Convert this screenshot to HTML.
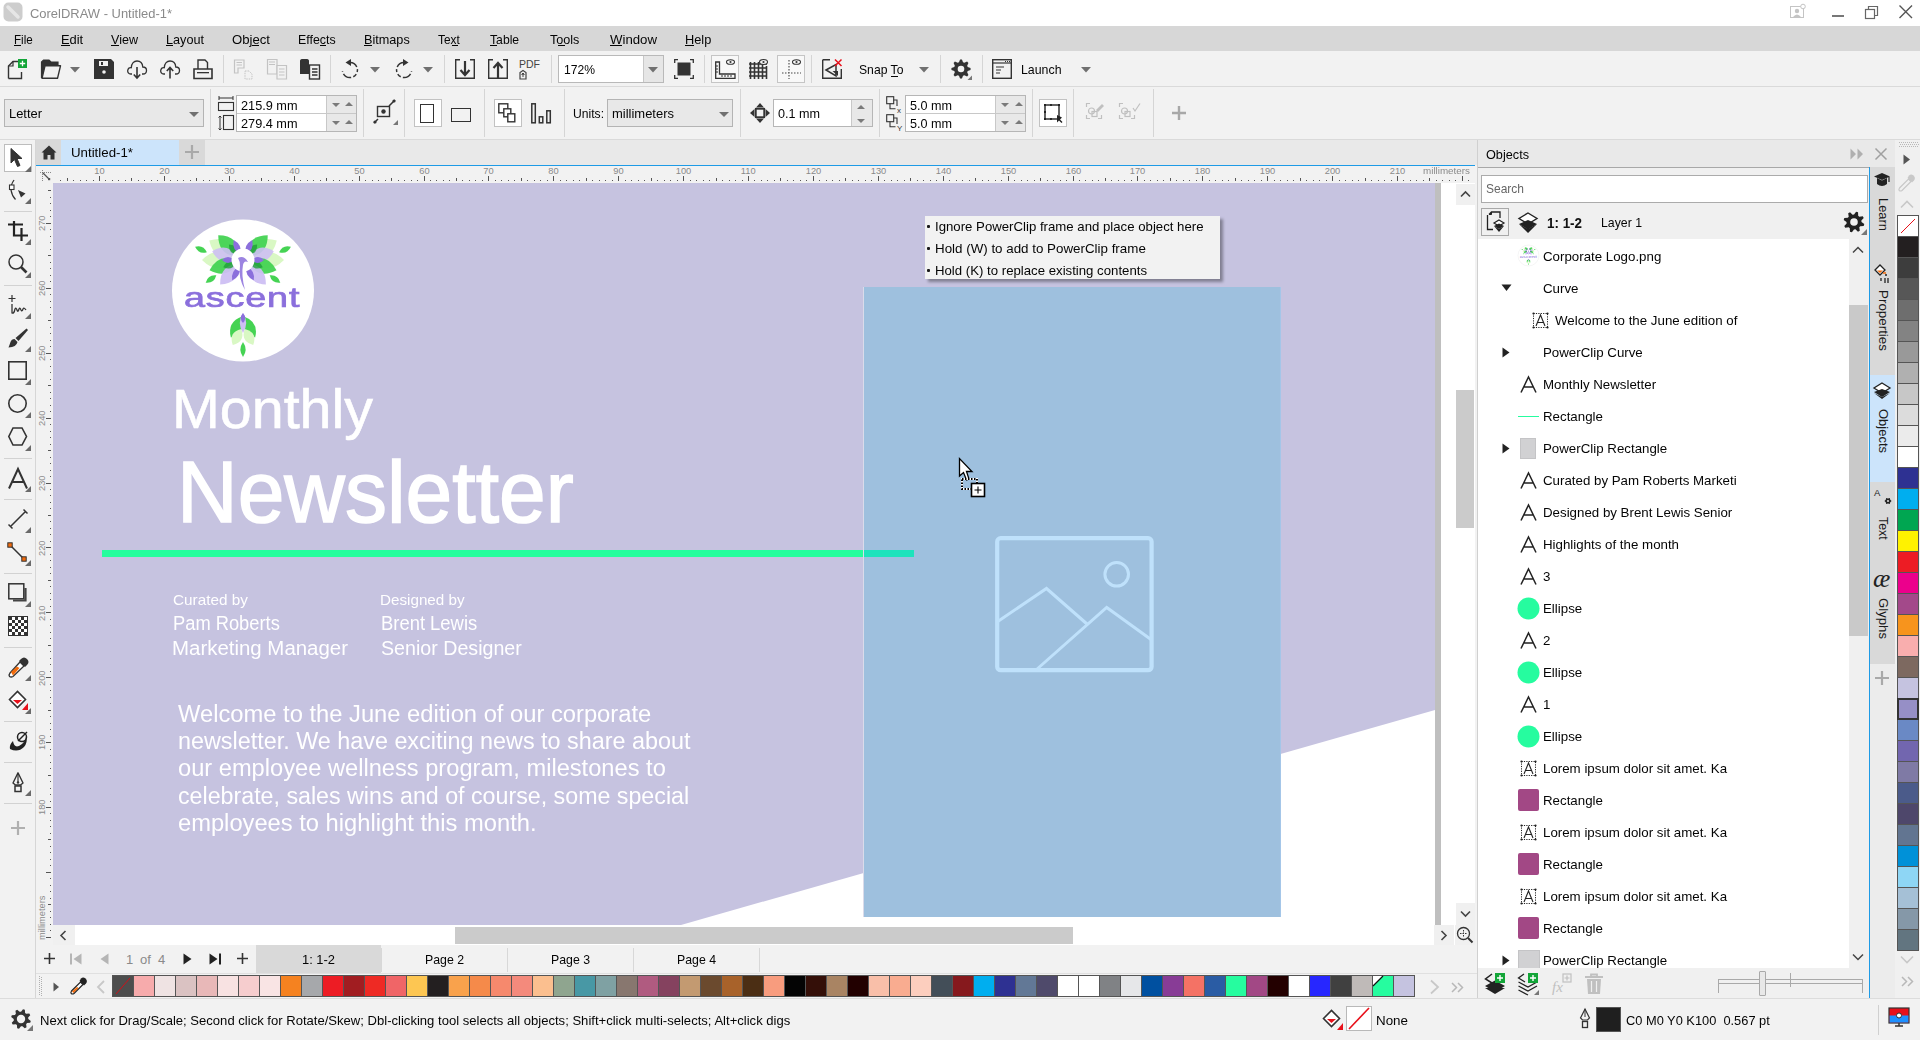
<!DOCTYPE html>
<html><head><meta charset="utf-8"><style>
html,body{margin:0;padding:0;width:1920px;height:1040px;overflow:hidden;background:#f2f2f2;position:relative;font-family:"Liberation Sans",sans-serif;}
.t{position:absolute;white-space:pre;line-height:1;}
.r{position:absolute;}
.s{position:absolute;overflow:visible;}
u{text-decoration:none;border-bottom:1px solid currentColor;}
</style></head><body>
<div class="r" style="left:0px;top:0px;width:1920px;height:26px;background:#ffffff;"></div>
<div class="r" style="left:0px;top:26px;width:1920px;height:25px;background:#d7d7d7;"></div>
<div class="r" style="left:0px;top:51px;width:1920px;height:35px;background:#f2f2f2;"></div>
<div class="r" style="left:0px;top:86px;width:1920px;height:1px;background:#dadada;"></div>
<div class="r" style="left:0px;top:87px;width:1920px;height:52px;background:#f2f2f2;"></div>
<div class="r" style="left:0px;top:139px;width:1920px;height:1px;background:#dadada;"></div>
<div class="r" style="left:0px;top:140px;width:35px;height:858px;background:#f2f2f2;"></div>
<div class="r" style="left:35px;top:140px;width:1px;height:858px;background:#d6d6d6;"></div>
<div class="r" style="left:36px;top:140px;width:1441px;height:25px;background:#e9e9e9;"></div>
<div class="r" style="left:36px;top:165px;width:1439px;height:1px;background:#1e9be6;"></div>
<div class="r" style="left:36px;top:166px;width:1439px;height:17px;background:#f2f2f2;"></div>
<div class="r" style="left:36px;top:183px;width:17px;height:762px;background:#f2f2f2;"></div>
<div class="r" style="left:53px;top:183px;width:1422px;height:762px;background:#ffffff;"></div>
<div class="r" style="left:36px;top:945px;width:1441px;height:53px;background:#f2f2f2;"></div>
<div class="r" style="left:0px;top:998px;width:1920px;height:1px;background:#dcdcdc;"></div>
<div class="r" style="left:0px;top:999px;width:1920px;height:41px;background:#f2f2f2;"></div>
<div class="r" style="left:1477px;top:140px;width:1px;height:858px;background:#d0d0d0;"></div>
<div class="r" style="left:1478px;top:140px;width:442px;height:27px;background:#e9e9e9;"></div>
<div class="r" style="left:1478px;top:167px;width:391px;height:1px;background:#a8a8a8;"></div>
<div class="r" style="left:1478px;top:168px;width:391px;height:71px;background:#f0f0f0;"></div>
<div class="r" style="left:1478px;top:239px;width:371px;height:729px;background:#ffffff;"></div>
<div class="r" style="left:1849px;top:239px;width:20px;height:729px;background:#f0f0f0;"></div>
<div class="r" style="left:1478px;top:968px;width:391px;height:30px;background:#f0f0f0;"></div>
<div class="r" style="left:1869px;top:167px;width:1px;height:831px;background:#1e9be6;"></div>
<div class="r" style="left:1870px;top:167px;width:25px;height:497px;background:#d9d9d9;"></div>
<div class="r" style="left:1870px;top:664px;width:25px;height:334px;background:#ececec;"></div>
<div class="r" style="left:1895px;top:140px;width:25px;height:858px;background:#f0f0f0;"></div>
<svg class="s" style="left:3px;top:2px;" width="20" height="20" viewBox="0 0 20 20"><rect x="0.5" y="0.5" width="19" height="19" rx="5" fill="#cdcdcd"/><path d="M5 5 L15 15" stroke="#e6e6e6" stroke-width="3.5" stroke-linecap="round"/></svg>
<div class="t" style="left:30.00px;top:6.57px;font-size:13.5px;color:#8a8a8a;transform:scaleX(0.9594);transform-origin:0 0;">CorelDRAW - Untitled-1*</div>
<svg class="s" style="left:1790px;top:4px;" width="16" height="15" viewBox="0 0 16 15"><rect x="0.5" y="2.5" width="13" height="11" fill="none" stroke="#c4c4c4"/><circle cx="7" cy="7" r="2.2" fill="#c4c4c4"/><path d="M3 13 Q7 8 11 13" fill="#c4c4c4"/><circle cx="13" cy="2.5" r="2.3" fill="#fff" stroke="#c4c4c4"/></svg>
<div class="r" style="left:1832px;top:15px;width:12px;height:2px;background:#777777;"></div>
<svg class="s" style="left:1864px;top:4px;" width="16" height="16" viewBox="0 0 16 16"><rect x="1.5" y="5.5" width="9" height="9" fill="none" stroke="#666" stroke-width="1.2"/><path d="M4.5 5.5 V2.5 H13.5 V11.5 H10.5" fill="none" stroke="#666" stroke-width="1.2"/></svg>
<svg class="s" style="left:1898px;top:4px;" width="16" height="16" viewBox="0 0 16 16"><path d="M1.5 1.5 L14 14 M14 1.5 L1.5 14" stroke="#555" stroke-width="1.4"/></svg>
<div class="t" style="left:13.80px;top:32.80px;font-size:13px;color:#050505;transform:scaleX(0.8927);transform-origin:0 0;">File</div>
<div class="r" style="left:14px;top:45px;width:7px;height:1px;background:#050505;"></div>
<div class="t" style="left:60.80px;top:32.80px;font-size:13px;color:#050505;transform:scaleX(0.9910);transform-origin:0 0;">Edit</div>
<div class="r" style="left:61px;top:45px;width:9px;height:1px;background:#050505;"></div>
<div class="t" style="left:110.80px;top:32.80px;font-size:13px;color:#050505;transform:scaleX(0.9653);transform-origin:0 0;">View</div>
<div class="r" style="left:111px;top:45px;width:8px;height:1px;background:#050505;"></div>
<div class="t" style="left:165.80px;top:32.80px;font-size:13px;color:#050505;transform:scaleX(0.9736);transform-origin:0 0;">Layout</div>
<div class="r" style="left:166px;top:45px;width:7px;height:1px;background:#050505;"></div>
<div class="t" style="left:232.00px;top:32.80px;font-size:13px;color:#050505;transform:scaleX(1.0114);transform-origin:0 0;">Object</div>
<div class="r" style="left:252px;top:45px;width:7px;height:1px;background:#050505;"></div>
<div class="t" style="left:298.00px;top:32.80px;font-size:13px;color:#050505;transform:scaleX(0.9513);transform-origin:0 0;">Effects</div>
<div class="r" style="left:320px;top:45px;width:6px;height:1px;background:#050505;"></div>
<div class="t" style="left:363.80px;top:32.80px;font-size:13px;color:#050505;transform:scaleX(0.9732);transform-origin:0 0;">Bitmaps</div>
<div class="r" style="left:364px;top:45px;width:8px;height:1px;background:#050505;"></div>
<div class="t" style="left:438.00px;top:32.80px;font-size:13px;color:#050505;transform:scaleX(0.9097);transform-origin:0 0;">Text</div>
<div class="r" style="left:452px;top:45px;width:6px;height:1px;background:#050505;"></div>
<div class="t" style="left:490.00px;top:32.80px;font-size:13px;color:#050505;transform:scaleX(0.9379);transform-origin:0 0;">Table</div>
<div class="r" style="left:490px;top:45px;width:7px;height:1px;background:#050505;"></div>
<div class="t" style="left:550.00px;top:32.80px;font-size:13px;color:#050505;transform:scaleX(0.9689);transform-origin:0 0;">Tools</div>
<div class="r" style="left:558px;top:45px;width:7px;height:1px;background:#050505;"></div>
<div class="t" style="left:610.00px;top:32.80px;font-size:13px;color:#050505;transform:scaleX(1.0165);transform-origin:0 0;">Window</div>
<div class="r" style="left:610px;top:45px;width:12px;height:1px;background:#050505;"></div>
<div class="t" style="left:685.00px;top:32.80px;font-size:13px;color:#050505;transform:scaleX(0.9837);transform-origin:0 0;">Help</div>
<div class="r" style="left:685px;top:45px;width:9px;height:1px;background:#050505;"></div>
<svg class="s" style="left:7px;top:59px;" width="21" height="21" viewBox="0 0 21 21"><path d="M1.5 19.5 V7 L6 2.5 H11" fill="none" stroke="#333" stroke-width="1.4"/><path d="M1.5 7 H6 V2.5" fill="none" stroke="#333" stroke-width="1.2"/><path d="M1.5 19.5 H14.5 V13" fill="none" stroke="#333" stroke-width="1.4"/><rect x="11" y="0" width="9" height="9" fill="#13a538"/><path d="M15.5 1.8 V7.2 M12.8 4.5 H18.2" stroke="#fff" stroke-width="1.3"/></svg>
<svg class="s" style="left:41px;top:59px;" width="20" height="20" viewBox="0 0 20 20"><path d="M0.5 19 V3 L2.5 1 H8 L10 3 H17 V6" fill="#333" stroke="#333" stroke-width="1.2"/><path d="M1 19.3 L4 6.8 H19.5 L16.5 19.3 Z" fill="#f2f2f2" stroke="#333" stroke-width="1.4" stroke-linejoin="round"/></svg>
<svg class="s" style="left:70px;top:67px;" width="10" height="6" viewBox="0 0 10 6"><path d="M0 0 H10 L5 5.5 Z" fill="#707070"/></svg>
<svg class="s" style="left:94px;top:59px;" width="20" height="20" viewBox="0 0 20 20"><path d="M0 0 H17 L20 3 V20 H0 Z" fill="#333"/><rect x="5" y="2" width="9" height="5" fill="#f2f2f2"/><rect x="7" y="3" width="2" height="3" fill="#333"/><circle cx="10" cy="13" r="1.8" fill="#f2f2f2"/></svg>
<svg class="s" style="left:127px;top:59px;" width="20" height="20" viewBox="0 0 20 20"><path d="M5 15 H3.8 C1.5 15 0.5 13 0.7 11.5 C1 9.5 2.5 8.5 4.3 8.7 C4.5 4.5 7 2 10 2 C13.5 2 15.5 4.5 15.8 8 C18 8 19.5 9.5 19.5 11.5 C19.5 13.5 18 15 16 15 H15" fill="none" stroke="#333" stroke-width="1.3"/><path d="M10 8 V19 M6.8 15.5 L10 19 L13.2 15.5" fill="none" stroke="#333" stroke-width="1.6"/></svg>
<svg class="s" style="left:160px;top:59px;" width="20" height="20" viewBox="0 0 20 20"><path d="M5 15 H3.8 C1.5 15 0.5 13 0.7 11.5 C1 9.5 2.5 8.5 4.3 8.7 C4.5 4.5 7 2 10 2 C13.5 2 15.5 4.5 15.8 8 C18 8 19.5 9.5 19.5 11.5 C19.5 13.5 18 15 16 15 H15" fill="none" stroke="#333" stroke-width="1.3"/><path d="M10 19.5 V8.5 M6.8 12 L10 8.5 L13.2 12" fill="none" stroke="#333" stroke-width="1.6"/></svg>
<svg class="s" style="left:193px;top:59px;" width="20" height="20" viewBox="0 0 20 20"><path d="M5 10 V1 H12 L14.5 3.5 V10" fill="none" stroke="#333" stroke-width="1.4"/><path d="M1 10 H19 V19.5 H1 Z" fill="none" stroke="#333" stroke-width="1.6"/><rect x="4" y="13" width="12" height="1.3" fill="#333"/></svg>
<div class="r" style="left:223px;top:55px;width:1px;height:28px;background:#d5d5d5;"></div>
<svg class="s" style="left:234px;top:59px;" width="20" height="20" viewBox="0 0 20 20"><path d="M0.5 1 H10 V9 H4 V14 H0.5 Z" fill="none" stroke="#c3c3c3" stroke-width="1.2"/><path d="M2.5 3.5 H8 M2.5 6 H8" stroke="#c3c3c3"/><path d="M11 12 H15 L18 15 V20 H11 Z" fill="none" stroke="#c3c3c3" stroke-dasharray="1.5 1"/></svg>
<svg class="s" style="left:267px;top:59px;" width="20" height="20" viewBox="0 0 20 20"><path d="M0.5 0.5 H10 V15 H0.5 Z" fill="none" stroke="#c3c3c3" stroke-width="1.2"/><path d="M2 3 H8 M2 5.5 H8" stroke="#c3c3c3"/><path d="M10 6.5 H19.5 V20 H10 Z" fill="#f2f2f2" stroke="#c3c3c3" stroke-width="1.2"/><path d="M12 10 H17.5 M12 13 H17.5 M12 16 H17.5" stroke="#c3c3c3" stroke-width="1.2"/></svg>
<svg class="s" style="left:300px;top:59px;" width="20" height="20" viewBox="0 0 20 20"><path d="M0 2 C0 0.5 1 0 3 0 H6 C8 0 9 0.5 9 2 V15 H0 Z" fill="#333"/><rect x="9.5" y="6" width="10" height="14" fill="#f2f2f2" stroke="#333" stroke-width="1.4"/><path d="M12 10 H17.5 M12 13 H17.5 M12 16 H17.5" stroke="#333" stroke-width="1.3"/></svg>
<div class="r" style="left:330px;top:55px;width:1px;height:28px;background:#d5d5d5;"></div>
<svg class="s" style="left:341px;top:59px;" width="20" height="20" viewBox="0 0 20 20"><path d="M8.5 3.5 A7.5 7.5 0 1 1 1.5 12" fill="none" stroke="#333" stroke-width="1.5" stroke-dasharray="9 2.2 3 2.2 4 2.2"/><path d="M4.5 3.5 L10 0 V7 Z" fill="#333"/></svg>
<svg class="s" style="left:370px;top:67px;" width="10" height="6" viewBox="0 0 10 6"><path d="M0 0 H10 L5 5.5 Z" fill="#707070"/></svg>
<svg class="s" style="left:393px;top:59px;" width="20" height="20" viewBox="0 0 20 20"><path d="M11.5 3.5 A7.5 7.5 0 1 0 18.5 12" fill="none" stroke="#333" stroke-width="1.5" stroke-dasharray="9 2.2 3 2.2 4 2.2"/><path d="M15.5 3.5 L10 0 V7 Z" fill="#333"/></svg>
<svg class="s" style="left:423px;top:67px;" width="10" height="6" viewBox="0 0 10 6"><path d="M0 0 H10 L5 5.5 Z" fill="#707070"/></svg>
<div class="r" style="left:444px;top:55px;width:1px;height:28px;background:#d5d5d5;"></div>
<svg class="s" style="left:455px;top:59px;" width="20" height="20" viewBox="0 0 20 20"><path d="M5 0.7 H0.7 V19.3 H19.3 V0.7 H15" fill="none" stroke="#333" stroke-width="1.4"/><path d="M10 2 V16 M5.5 11 L10 16 L14.5 11" fill="none" stroke="#333" stroke-width="2.2"/></svg>
<svg class="s" style="left:488px;top:59px;" width="20" height="20" viewBox="0 0 20 20"><path d="M5 0.7 H0.7 V19.3 H19.3 V0.7 H15" fill="none" stroke="#333" stroke-width="1.4"/><path d="M10 19 V4 M5.5 9 L10 4 L14.5 9" fill="none" stroke="#333" stroke-width="2.2"/></svg>
<svg class="s" style="left:519px;top:59px;" width="22" height="20" viewBox="0 0 22 20"><text x="0" y="9" font-family="Liberation Sans" font-size="10.5" fill="#444">PDF</text><path d="M1 20 V13.5 L4 11.5 L7 13.5 V20 Z" fill="none" stroke="#444" stroke-width="1.2"/><path d="M4 18 V14 M2.5 15.5 L4 14 L5.5 15.5" stroke="#444" stroke-width="1"/></svg>
<div class="r" style="left:551px;top:55px;width:1px;height:28px;background:#d5d5d5;"></div>
<div class="r" style="left:558px;top:55px;width:106px;height:28px;background:#ffffff;box-sizing:border-box;border:1px solid #b9b9b9;"></div>
<div class="r" style="left:643px;top:56px;width:20px;height:26px;background:#e6e6e6;box-sizing:border-box;border-left:1px solid #c8c8c8;"></div>
<svg class="s" style="left:648px;top:67px;" width="10" height="6" viewBox="0 0 10 6"><path d="M0 0 H10 L5 5.5 Z" fill="#707070"/></svg>
<div class="t" style="left:564.00px;top:62.80px;font-size:13px;color:#050505;transform:scaleX(0.9324);transform-origin:0 0;">172%</div>
<svg class="s" style="left:674px;top:59px;" width="20" height="20" viewBox="0 0 20 20"><path d="M0.7 4 V0.7 H4 M16 0.7 H19.3 V4 M19.3 16 V19.3 H16 M4 19.3 H0.7 V16" fill="none" stroke="#333" stroke-width="1.3"/><rect x="3.5" y="3.5" width="13" height="13" fill="#333"/></svg>
<div class="r" style="left:704px;top:55px;width:1px;height:28px;background:#d5d5d5;"></div>
<div class="r" style="left:711px;top:55px;width:28px;height:28px;background:#f8f8f8;box-sizing:border-box;border:1px solid #c5c5c5;"></div>
<svg class="s" style="left:715px;top:59px;" width="21" height="20" viewBox="0 0 21 20"><path d="M0.7 3 V19.3 H20 V15 H4.5 V3 Z" fill="none" stroke="#333" stroke-width="1.3"/><path d="M1 7 H3 M1 10 H3 M1 13 H3 M7 16 V18 M10 16 V18 M13 16 V18 M16 16 V18" stroke="#333"/><ellipse cx="15.5" cy="3" rx="4" ry="2.3" fill="none" stroke="#333" stroke-width="1.1"/><circle cx="15.5" cy="3" r="1.1" fill="#333"/></svg>
<svg class="s" style="left:748px;top:59px;" width="20" height="20" viewBox="0 0 20 20"><path d="M1 5 H19 M1 9 H19 M1 13 H19 M1 17 H19 M2.5 3 V20 M6.5 3 V20 M10.5 3 V20 M14.5 3 V20 M18.5 7 V20" stroke="#333" stroke-width="1.6"/><ellipse cx="15.5" cy="3" rx="4" ry="2.5" fill="#f2f2f2" stroke="#333" stroke-width="1.1"/><circle cx="15.5" cy="3" r="1.1" fill="#333"/></svg>
<div class="r" style="left:777px;top:55px;width:28px;height:28px;background:#f8f8f8;box-sizing:border-box;border:1px solid #c5c5c5;"></div>
<svg class="s" style="left:781px;top:59px;" width="20" height="20" viewBox="0 0 20 20"><path d="M8 1 V20 M1 14 H20" stroke="#444" stroke-width="1.1" stroke-dasharray="1.5 1.5"/><ellipse cx="15.5" cy="3" rx="4" ry="2.3" fill="none" stroke="#333" stroke-width="1.1"/><circle cx="15.5" cy="3" r="1.1" fill="#333"/></svg>
<div class="r" style="left:811px;top:55px;width:1px;height:28px;background:#d5d5d5;"></div>
<svg class="s" style="left:822px;top:59px;" width="20" height="20" viewBox="0 0 20 20"><path d="M0.7 0.7 H8 M0.7 0.7 V19.3 H19.3 V10" fill="none" stroke="#333" stroke-width="1.4"/><path d="M4 11 L14 5.5 V17 Z" fill="none" stroke="#333" stroke-width="1.5"/><path d="M10.5 12 L16 17 V12 Z" fill="#333"/><path d="M13 0.5 L19.5 7 M19.5 0.5 L13 7" stroke="#e8101a" stroke-width="1.5"/></svg>
<div class="t" style="left:859.00px;top:63.00px;font-size:13px;color:#050505;transform:scaleX(0.9360);transform-origin:0 0;">Snap To</div>
<div class="r" style="left:891px;top:76px;width:7px;height:1px;background:#050505;"></div>
<svg class="s" style="left:919px;top:67px;" width="10" height="6" viewBox="0 0 10 6"><path d="M0 0 H10 L5 5.5 Z" fill="#707070"/></svg>
<div class="r" style="left:940px;top:55px;width:1px;height:28px;background:#d5d5d5;"></div>
<svg class="s" style="left:951px;top:59px;" width="22" height="22" viewBox="0 0 22 22"><path d="M19.55 9.06 L19.55 10.94 L16.70 12.03 L16.17 13.30 L17.42 16.09 L16.09 17.42 L13.30 16.17 L12.03 16.70 L10.94 19.55 L9.06 19.55 L7.97 16.70 L6.70 16.17 L3.91 17.42 L2.58 16.09 L3.83 13.30 L3.30 12.03 L0.45 10.94 L0.45 9.06 L3.30 7.97 L3.83 6.70 L2.58 3.91 L3.91 2.58 L6.70 3.83 L7.97 3.30 L9.06 0.45 L10.94 0.45 L12.03 3.30 L13.30 3.83 L16.09 2.58 L17.42 3.91 L16.17 6.70 L16.70 7.97 Z" fill="#333"/><circle cx="10" cy="10" r="3.3" fill="#f2f2f2"/><path d="M16.5 21 L21 16.5 V21 Z" fill="#777"/></svg>
<div class="r" style="left:982px;top:55px;width:1px;height:28px;background:#d5d5d5;"></div>
<svg class="s" style="left:992px;top:59px;" width="20" height="20" viewBox="0 0 20 20"><rect x="0.7" y="0.7" width="18.6" height="18.6" fill="none" stroke="#333" stroke-width="1.4"/><path d="M1 4 H19" stroke="#333" stroke-width="1.2"/><path d="M13 2.5 H14 M15 2.5 H16 M17 2.5 H18" stroke="#333"/><path d="M4 8 H12 M4 11 H9 M4 14 H8" stroke="#333" stroke-width="1.2"/></svg>
<div class="t" style="left:1021.00px;top:63.00px;font-size:13px;color:#050505;transform:scaleX(0.9496);transform-origin:0 0;">Launch</div>
<svg class="s" style="left:1081px;top:67px;" width="10" height="6" viewBox="0 0 10 6"><path d="M0 0 H10 L5 5.5 Z" fill="#707070"/></svg>
<div class="r" style="left:4px;top:99px;width:200px;height:28px;background:#e8e8e8;box-sizing:border-box;border:1px solid #b4b4b4;"></div>
<div class="t" style="left:9.00px;top:106.57px;font-size:13.5px;color:#050505;transform:scaleX(0.9559);transform-origin:0 0;">Letter</div>
<svg class="s" style="left:189px;top:112px;" width="10" height="6" viewBox="0 0 10 6"><path d="M0 0 H10 L5.0 5 Z" fill="#707070"/></svg>
<div class="r" style="left:210px;top:89px;width:1px;height:48px;background:#d5d5d5;"></div>
<svg class="s" style="left:218px;top:95px;" width="18" height="36" viewBox="0 0 18 36"><path d="M1 3 H15 M1 1 V5 M15 1 V5" stroke="#333" stroke-width="1"/><rect x="0.5" y="7.5" width="15" height="8" fill="none" stroke="#333" stroke-width="1.1"/><path d="M2 21 V35 M0.5 22.5 L2 21 L3.5 22.5 M0.5 33.5 L2 35 L3.5 33.5" fill="none" stroke="#333" stroke-width="1"/><rect x="5.5" y="20.5" width="10" height="14" fill="none" stroke="#333" stroke-width="1.1"/></svg>
<div class="r" style="left:236px;top:95px;width:121px;height:37px;background:#ffffff;box-sizing:border-box;border:1px solid #b6b6b6;"></div>
<div class="r" style="left:326px;top:96px;width:30px;height:35px;background:#e8e8e8;box-sizing:border-box;border-left:1px solid #c8c8c8;"></div>
<div class="r" style="left:237px;top:113px;width:119px;height:1px;background:#c8c8c8;"></div>
<div class="t" style="left:241.00px;top:98.57px;font-size:13.5px;color:#050505;transform:scaleX(0.9413);transform-origin:0 0;">215.9 mm</div>
<div class="t" style="left:241.00px;top:116.57px;font-size:13.5px;color:#050505;transform:scaleX(0.9413);transform-origin:0 0;">279.4 mm</div>
<svg class="s" style="left:332px;top:103px;" width="8" height="5" viewBox="0 0 8 5"><path d="M0 0 H8 L4.0 4 Z" fill="#7a7a7a"/></svg>
<svg class="s" style="left:345px;top:102px;" width="8" height="5" viewBox="0 0 8 5"><path d="M0 4 H8 L4.0 0 Z" fill="#7a7a7a"/></svg>
<svg class="s" style="left:332px;top:121px;" width="8" height="5" viewBox="0 0 8 5"><path d="M0 0 H8 L4.0 4 Z" fill="#7a7a7a"/></svg>
<svg class="s" style="left:345px;top:120px;" width="8" height="5" viewBox="0 0 8 5"><path d="M0 4 H8 L4.0 0 Z" fill="#7a7a7a"/></svg>
<div class="r" style="left:363px;top:89px;width:1px;height:48px;background:#d5d5d5;"></div>
<svg class="s" style="left:373px;top:98px;" width="26" height="28" viewBox="0 0 26 28"><rect x="4.5" y="8.5" width="12" height="10" fill="none" stroke="#333" stroke-width="1.4"/><circle cx="10.5" cy="13.5" r="2.2" fill="#333"/><path d="M1 25 L5 21 M16 8 L22 2" stroke="#333" stroke-width="1.5"/><circle cx="2" cy="24" r="1.6" fill="#333"/><circle cx="21" cy="3" r="1.6" fill="#333"/><path d="M20 27 L25 22 V27 Z" fill="#777"/></svg>
<div class="r" style="left:404px;top:89px;width:1px;height:48px;background:#d5d5d5;"></div>
<div class="r" style="left:414px;top:99px;width:28px;height:28px;background:#ffffff;box-sizing:border-box;border:1px solid #c2c2c2;"></div>
<div class="r" style="left:420px;top:104px;width:14px;height:19px;background:transparent;box-sizing:border-box;border:1.6px solid #333;"></div>
<div class="r" style="left:451px;top:108px;width:20px;height:14px;background:transparent;box-sizing:border-box;border:1.6px solid #333;"></div>
<div class="r" style="left:484px;top:89px;width:1px;height:48px;background:#d5d5d5;"></div>
<div class="r" style="left:494px;top:99px;width:28px;height:28px;background:#ffffff;box-sizing:border-box;border:1px solid #c2c2c2;"></div>
<svg class="s" style="left:498px;top:103px;" width="20" height="20" viewBox="0 0 20 20"><rect x="0.8" y="0.8" width="9" height="9" fill="none" stroke="#333" stroke-width="1.4"/><rect x="5.8" y="5.8" width="7" height="8" fill="#fff" stroke="#333" stroke-width="1.4"/><rect x="9.8" y="10.8" width="7" height="8" fill="#fff" stroke="#333" stroke-width="1.4"/></svg>
<svg class="s" style="left:531px;top:103px;" width="21" height="21" viewBox="0 0 21 21"><rect x="0.8" y="0.8" width="3.5" height="19" fill="none" stroke="#333" stroke-width="1.5"/><rect x="8.3" y="13.8" width="3.5" height="6" fill="none" stroke="#333" stroke-width="1.5"/><rect x="15.8" y="7.8" width="3.5" height="12" fill="none" stroke="#333" stroke-width="1.5"/></svg>
<div class="r" style="left:564px;top:89px;width:1px;height:48px;background:#d5d5d5;"></div>
<div class="t" style="left:573.00px;top:106.57px;font-size:13.5px;color:#050505;transform:scaleX(0.8983);transform-origin:0 0;">Units:</div>
<div class="r" style="left:607px;top:99px;width:126px;height:28px;background:#e8e8e8;box-sizing:border-box;border:1px solid #b4b4b4;"></div>
<div class="t" style="left:612.00px;top:106.57px;font-size:13.5px;color:#050505;transform:scaleX(0.9612);transform-origin:0 0;">millimeters</div>
<svg class="s" style="left:719px;top:112px;" width="10" height="6" viewBox="0 0 10 6"><path d="M0 0 H10 L5.0 5 Z" fill="#707070"/></svg>
<div class="r" style="left:740px;top:89px;width:1px;height:48px;background:#d5d5d5;"></div>
<svg class="s" style="left:750px;top:103px;" width="20" height="20" viewBox="0 0 20 20"><path d="M10 0 L14 4.5 H6 Z M10 20 L14 15.5 H6 Z M0 10 L4.5 6 V14 Z M20 10 L15.5 6 V14 Z" fill="#333"/><rect x="5.8" y="5.8" width="8.4" height="8.4" fill="none" stroke="#333" stroke-width="1.8"/></svg>
<div class="r" style="left:773px;top:99px;width:100px;height:28px;background:#ffffff;box-sizing:border-box;border:1px solid #b6b6b6;"></div>
<div class="r" style="left:851px;top:100px;width:21px;height:26px;background:#e8e8e8;box-sizing:border-box;border-left:1px solid #c8c8c8;"></div>
<div class="t" style="left:778.00px;top:106.57px;font-size:13.5px;color:#050505;transform:scaleX(0.9332);transform-origin:0 0;">0.1 mm</div>
<svg class="s" style="left:857px;top:105px;" width="8" height="5" viewBox="0 0 8 5"><path d="M0 4 H8 L4.0 0 Z" fill="#7a7a7a"/></svg>
<svg class="s" style="left:857px;top:119px;" width="8" height="5" viewBox="0 0 8 5"><path d="M0 0 H8 L4.0 4 Z" fill="#7a7a7a"/></svg>
<div class="r" style="left:879px;top:89px;width:1px;height:48px;background:#d5d5d5;"></div>
<svg class="s" style="left:886px;top:96px;" width="18" height="18" viewBox="0 0 18 18"><rect x="0.7" y="0.7" width="7" height="7" fill="none" stroke="#333" stroke-width="1.1"/><path d="M4 7.5 V12.7 H9.5 M7.5 4 H11 V10" fill="none" stroke="#333" stroke-width="1.1"/><text x="11" y="17" font-family="Liberation Sans" font-size="8" fill="#333">x</text></svg>
<svg class="s" style="left:886px;top:114px;" width="18" height="18" viewBox="0 0 18 18"><rect x="0.7" y="0.7" width="7" height="7" fill="none" stroke="#333" stroke-width="1.1"/><path d="M4 7.5 V12.7 H9.5 M7.5 4 H11 V10" fill="none" stroke="#333" stroke-width="1.1"/><text x="11" y="17" font-family="Liberation Sans" font-size="8" fill="#333">Y</text></svg>
<div class="r" style="left:905px;top:95px;width:121px;height:37px;background:#ffffff;box-sizing:border-box;border:1px solid #b6b6b6;"></div>
<div class="r" style="left:995px;top:96px;width:30px;height:35px;background:#e8e8e8;box-sizing:border-box;border-left:1px solid #c8c8c8;"></div>
<div class="r" style="left:906px;top:113px;width:119px;height:1px;background:#c8c8c8;"></div>
<div class="t" style="left:910.00px;top:98.57px;font-size:13.5px;color:#050505;transform:scaleX(0.9332);transform-origin:0 0;">5.0 mm</div>
<div class="t" style="left:910.00px;top:116.57px;font-size:13.5px;color:#050505;transform:scaleX(0.9332);transform-origin:0 0;">5.0 mm</div>
<svg class="s" style="left:1001px;top:103px;" width="8" height="5" viewBox="0 0 8 5"><path d="M0 0 H8 L4.0 4 Z" fill="#7a7a7a"/></svg>
<svg class="s" style="left:1015px;top:102px;" width="8" height="5" viewBox="0 0 8 5"><path d="M0 4 H8 L4.0 0 Z" fill="#7a7a7a"/></svg>
<svg class="s" style="left:1001px;top:121px;" width="8" height="5" viewBox="0 0 8 5"><path d="M0 0 H8 L4.0 4 Z" fill="#7a7a7a"/></svg>
<svg class="s" style="left:1015px;top:120px;" width="8" height="5" viewBox="0 0 8 5"><path d="M0 4 H8 L4.0 0 Z" fill="#7a7a7a"/></svg>
<div class="r" style="left:1032px;top:89px;width:1px;height:48px;background:#d5d5d5;"></div>
<div class="r" style="left:1039px;top:99px;width:28px;height:28px;background:#ffffff;box-sizing:border-box;border:1px solid #c2c2c2;"></div>
<svg class="s" style="left:1043px;top:103px;" width="21" height="21" viewBox="0 0 21 21"><rect x="2" y="2" width="14" height="14" fill="none" stroke="#222" stroke-width="1.4"/><path d="M1 2 H3 M8 1 V3 M15 2 H17 M1 9 H3 M1 16 H3 M8 15 V17" stroke="#222" stroke-width="1.8"/><path d="M14 12 L14 19.5 L16 17.5 L18.5 20 L19.5 19 L17 16.5 L19 14.5 Z" fill="#222"/></svg>
<div class="r" style="left:1073px;top:89px;width:1px;height:48px;background:#d5d5d5;"></div>
<svg class="s" style="left:1086px;top:103px;" width="20" height="20" viewBox="0 0 20 20"><path d="M0.5 4 V0.5 H4 M0.5 12 V15.5 H4 M12 15.5 H15.5 V12" fill="none" stroke="#c0c0c0" stroke-width="1.2"/><circle cx="5.5" cy="8" r="3" fill="none" stroke="#c0c0c0" stroke-width="1.2"/><rect x="6" y="8.5" width="5" height="5" fill="none" stroke="#c0c0c0" stroke-width="1.2"/><path d="M10 7 L16 1 L18 3 L12 9 Z" fill="#c0c0c0"/></svg>
<svg class="s" style="left:1119px;top:103px;" width="22" height="20" viewBox="0 0 22 20"><path d="M0.5 4 V0.5 H4 M0.5 12 V15.5 H4 M12 15.5 H15.5 V12" fill="none" stroke="#c0c0c0" stroke-width="1.2"/><circle cx="5.5" cy="8" r="3" fill="none" stroke="#c0c0c0" stroke-width="1.2"/><rect x="6" y="8.5" width="5" height="5" fill="none" stroke="#c0c0c0" stroke-width="1.2"/><path d="M14 5 L16 8 L21 0.5" fill="none" stroke="#c0c0c0" stroke-width="1.2"/></svg>
<div class="r" style="left:1153px;top:89px;width:1px;height:48px;background:#d5d5d5;"></div>
<svg class="s" style="left:1172px;top:106px;" width="14" height="14" viewBox="0 0 14 14"><path d="M7 0 V14 M0 7 H14" stroke="#a8a8a8" stroke-width="2.4"/></svg>
<div class="r" style="left:36px;top:140px;width:25px;height:25px;background:#d9d9d9;"></div>
<svg class="s" style="left:41px;top:145px;" width="16" height="15" viewBox="0 0 16 15"><path d="M8 0.5 L0.5 7.5 H2.5 V14.5 H6.5 V10 H9.5 V14.5 H13.5 V7.5 H15.5 Z" fill="#333"/></svg>
<div class="r" style="left:61px;top:140px;width:118px;height:25px;background:#cce4fb;"></div>
<div class="t" style="left:71.00px;top:146.17px;font-size:13.5px;color:#050505;transform:scaleX(0.9836);transform-origin:0 0;">Untitled-1*</div>
<div class="r" style="left:179px;top:140px;width:26px;height:25px;background:#d9d9d9;"></div>
<svg class="s" style="left:185px;top:145px;" width="14" height="14" viewBox="0 0 14 14"><path d="M7 0 V14 M0 7 H14" stroke="#a9a9a9" stroke-width="2.2"/></svg>
<div class="r" style="left:4px;top:144px;width:28px;height:28px;background:#ffffff;box-sizing:border-box;border:1px solid #bdbdbd;"></div>
<svg class="s" style="left:8px;top:148px;" width="20" height="20" viewBox="0 0 20 20"><path d="M3 0.5 L3 15 L6.5 11.5 L9.5 18.5 L12 17.5 L9 10.5 L14 10.5 Z" fill="#333" stroke="#333" stroke-width="1" stroke-linejoin="round"/></svg>
<svg class="s" style="left:25px;top:166px;" width="6" height="6" viewBox="0 0 6 6"><path d="M0 6 L6 0 V6 Z" fill="#6a6a6a"/></svg>
<svg class="s" style="left:8px;top:180px;" width="20" height="20" viewBox="0 0 20 20"><path d="M6 0 Q2.5 5 3 10 Q4 16 7.5 19.5" fill="none" stroke="#333" stroke-width="1.3"/><rect x="1.5" y="5" width="4.5" height="4.5" fill="#fff" stroke="#333" stroke-width="1.1"/><path d="M10 10 L17.5 13.5 L13 17.5 Z" fill="#333"/></svg>
<svg class="s" style="left:25px;top:198px;" width="6" height="6" viewBox="0 0 6 6"><path d="M0 6 L6 0 V6 Z" fill="#6a6a6a"/></svg>
<div class="r" style="left:4px;top:211px;width:28px;height:1px;background:#d2d2d2;"></div>
<svg class="s" style="left:8px;top:221px;" width="20" height="20" viewBox="0 0 20 20"><path d="M0 3.5 H15 M6 0 V14.5 H20 M13.5 7 V20" fill="none" stroke="#222" stroke-width="2.2"/></svg>
<svg class="s" style="left:25px;top:239px;" width="6" height="6" viewBox="0 0 6 6"><path d="M0 6 L6 0 V6 Z" fill="#6a6a6a"/></svg>
<svg class="s" style="left:8px;top:254px;" width="20" height="20" viewBox="0 0 20 20"><circle cx="8" cy="8" r="7" fill="none" stroke="#333" stroke-width="1.5"/><path d="M13 13 L18.5 18.5" stroke="#333" stroke-width="2.6"/></svg>
<svg class="s" style="left:25px;top:272px;" width="6" height="6" viewBox="0 0 6 6"><path d="M0 6 L6 0 V6 Z" fill="#6a6a6a"/></svg>
<div class="r" style="left:4px;top:285px;width:28px;height:1px;background:#d2d2d2;"></div>
<svg class="s" style="left:8px;top:295px;" width="20" height="20" viewBox="0 0 20 20"><path d="M4 0 V7 M0.5 3.5 H7.5" stroke="#333" stroke-width="1.2"/><path d="M4 9 V18 Q6 19 7 14 Q8 12 9 15 Q10 18 11 14 Q12 12 13 15 Q14 17 15 14 Q16 12 18 15" fill="none" stroke="#333" stroke-width="1.3"/></svg>
<svg class="s" style="left:25px;top:313px;" width="6" height="6" viewBox="0 0 6 6"><path d="M0 6 L6 0 V6 Z" fill="#6a6a6a"/></svg>
<svg class="s" style="left:8px;top:328px;" width="20" height="20" viewBox="0 0 20 20"><path d="M18.5 0.5 L20 2 L10.5 13 L7.5 10 Z" fill="#333"/><path d="M6.5 11 L9.5 14 Q8.5 19 0.5 19.5 Q1.5 17 2.5 14 Q3.5 11 6.5 11 Z" fill="#333"/></svg>
<svg class="s" style="left:25px;top:346px;" width="6" height="6" viewBox="0 0 6 6"><path d="M0 6 L6 0 V6 Z" fill="#6a6a6a"/></svg>
<svg class="s" style="left:8px;top:361px;" width="20" height="20" viewBox="0 0 20 20"><rect x="0.8" y="0.8" width="17.4" height="17.4" fill="none" stroke="#333" stroke-width="1.6"/></svg>
<svg class="s" style="left:25px;top:379px;" width="6" height="6" viewBox="0 0 6 6"><path d="M0 6 L6 0 V6 Z" fill="#6a6a6a"/></svg>
<svg class="s" style="left:8px;top:394px;" width="20" height="20" viewBox="0 0 20 20"><circle cx="9.5" cy="9.5" r="8.7" fill="none" stroke="#333" stroke-width="1.6"/></svg>
<svg class="s" style="left:25px;top:412px;" width="6" height="6" viewBox="0 0 6 6"><path d="M0 6 L6 0 V6 Z" fill="#6a6a6a"/></svg>
<svg class="s" style="left:8px;top:427px;" width="20" height="20" viewBox="0 0 20 20"><path d="M5 1 H14 L18.5 9.5 L14 18 H5 L0.8 9.5 Z" fill="none" stroke="#333" stroke-width="1.6"/></svg>
<svg class="s" style="left:25px;top:445px;" width="6" height="6" viewBox="0 0 6 6"><path d="M0 6 L6 0 V6 Z" fill="#6a6a6a"/></svg>
<div class="r" style="left:4px;top:458px;width:28px;height:1px;background:#d2d2d2;"></div>
<svg class="s" style="left:7.5px;top:468px;" width="20" height="20" viewBox="0 0 20 20"><path d="M1 20.5 L10 1 L19 20.5 M4.5 14 H15.5" fill="none" stroke="#333" stroke-width="2"/></svg>
<svg class="s" style="left:25px;top:486px;" width="6" height="6" viewBox="0 0 6 6"><path d="M0 6 L6 0 V6 Z" fill="#6a6a6a"/></svg>
<div class="r" style="left:4px;top:499px;width:28px;height:1px;background:#d2d2d2;"></div>
<svg class="s" style="left:8px;top:509px;" width="20" height="20" viewBox="0 0 20 20"><path d="M2.5 17.5 L17.5 2.5 M0.5 15.5 L4.5 19.5 M15.5 0.5 L19.5 4.5" stroke="#333" stroke-width="1.5"/></svg>
<svg class="s" style="left:25px;top:527px;" width="6" height="6" viewBox="0 0 6 6"><path d="M0 6 L6 0 V6 Z" fill="#6a6a6a"/></svg>
<svg class="s" style="left:7px;top:542px;" width="20" height="20" viewBox="0 0 20 20"><path d="M3 3 L16 16" stroke="#333" stroke-width="1.5"/><rect x="0.8" y="0.8" width="4.4" height="4.4" fill="#f26a0a" stroke="#333" stroke-width="1"/><rect x="14.8" y="14.8" width="4.4" height="4.4" fill="#f26a0a" stroke="#333" stroke-width="1"/></svg>
<svg class="s" style="left:25px;top:560px;" width="6" height="6" viewBox="0 0 6 6"><path d="M0 6 L6 0 V6 Z" fill="#6a6a6a"/></svg>
<div class="r" style="left:4px;top:573px;width:28px;height:1px;background:#d2d2d2;"></div>
<svg class="s" style="left:8px;top:583px;" width="20" height="20" viewBox="0 0 20 20"><path d="M5 17.5 H17.5 V5" fill="none" stroke="#444" stroke-width="2.2"/><rect x="0.8" y="0.8" width="15" height="15" fill="#f2f2f2" stroke="#333" stroke-width="1.5"/></svg>
<svg class="s" style="left:25px;top:601px;" width="6" height="6" viewBox="0 0 6 6"><path d="M0 6 L6 0 V6 Z" fill="#6a6a6a"/></svg>
<svg class="s" style="left:8px;top:616px;" width="20" height="20" viewBox="0 0 20 20"><rect x="0.5" y="0.5" width="19" height="19" fill="#fff" stroke="#333"/><rect x="1" y="1" width="3" height="3" fill="#333"/><rect x="1" y="7" width="3" height="3" fill="#333"/><rect x="1" y="13" width="3" height="3" fill="#333"/><rect x="4" y="4" width="3" height="3" fill="#333"/><rect x="4" y="10" width="3" height="3" fill="#333"/><rect x="4" y="16" width="3" height="3" fill="#333"/><rect x="7" y="1" width="3" height="3" fill="#333"/><rect x="7" y="7" width="3" height="3" fill="#333"/><rect x="7" y="13" width="3" height="3" fill="#333"/><rect x="10" y="4" width="3" height="3" fill="#333"/><rect x="10" y="10" width="3" height="3" fill="#333"/><rect x="10" y="16" width="3" height="3" fill="#333"/><rect x="13" y="1" width="3" height="3" fill="#333"/><rect x="13" y="7" width="3" height="3" fill="#333"/><rect x="13" y="13" width="3" height="3" fill="#333"/><rect x="16" y="4" width="3" height="3" fill="#333"/><rect x="16" y="10" width="3" height="3" fill="#333"/><rect x="16" y="16" width="3" height="3" fill="#333"/></svg>
<div class="r" style="left:4px;top:647px;width:28px;height:1px;background:#d2d2d2;"></div>
<svg class="s" style="left:8px;top:657px;" width="20" height="20" viewBox="0 0 20 20"><path d="M13 2 Q16 -1 19 2 Q22 5 19 8 L17 10 L11 4 Z" fill="#333"/><path d="M12 5 L16 9 L5 19.5 Q3 20.5 1.5 19.5 Q0.5 18 2 16 Z" fill="#fff" stroke="#333" stroke-width="1.3"/><path d="M3 15 L9 9.5 L11.5 11 L5 18.5 Z" fill="#f26a0a"/></svg>
<svg class="s" style="left:25px;top:675px;" width="6" height="6" viewBox="0 0 6 6"><path d="M0 6 L6 0 V6 Z" fill="#6a6a6a"/></svg>
<svg class="s" style="left:8px;top:690px;" width="20" height="20" viewBox="0 0 20 20"><path d="M1.5 9.5 L9.5 1.5 L17.5 9.5 L9.5 17.5 Z" fill="#fff" stroke="#333" stroke-width="1.6"/><path d="M5 10 H14 L9.5 14 Z" fill="#e8101a"/><path d="M14 20 L20 13 V20 Z" fill="#e8101a"/></svg>
<svg class="s" style="left:25px;top:708px;" width="6" height="6" viewBox="0 0 6 6"><path d="M0 6 L6 0 V6 Z" fill="#6a6a6a"/></svg>
<div class="r" style="left:4px;top:721px;width:28px;height:1px;background:#d2d2d2;"></div>
<svg class="s" style="left:8px;top:731px;" width="20" height="20" viewBox="0 0 20 20"><path d="M5 10 Q1 14 2 18 Q10 22 16 16 Q20 11 18 6 Q17 12 11 15 Q6 17 5 10 Z" fill="#222"/><circle cx="14" cy="6" r="4.5" fill="none" stroke="#222" stroke-width="1.5"/><path d="M10 10 L19 1" stroke="#222" stroke-width="1.5"/></svg>
<div class="r" style="left:4px;top:762px;width:28px;height:1px;background:#d2d2d2;"></div>
<svg class="s" style="left:8px;top:772px;" width="20" height="20" viewBox="0 0 20 20"><path d="M10 0.8 L15 11 L12.5 13 H7.5 L5 11 Z" fill="none" stroke="#333" stroke-width="1.4" stroke-linejoin="round"/><path d="M10 1 V10" stroke="#333" stroke-width="1.2"/><circle cx="10" cy="10.5" r="1.2" fill="#333"/><rect x="7" y="14" width="6" height="5.5" fill="none" stroke="#333" stroke-width="1.5"/></svg>
<svg class="s" style="left:25px;top:790px;" width="6" height="6" viewBox="0 0 6 6"><path d="M0 6 L6 0 V6 Z" fill="#6a6a6a"/></svg>
<div class="r" style="left:4px;top:803px;width:28px;height:1px;background:#d2d2d2;"></div>
<svg class="s" style="left:11px;top:821px;" width="14" height="14" viewBox="0 0 14 14"><path d="M7 0 V14 M0 7 H14" stroke="#b0b0b0" stroke-width="2.2"/></svg>
<svg class="s" style="left:39px;top:169px;" width="14" height="14" viewBox="0 0 14 14"><path d="M1 3.5 H12 M3.5 1 V12" stroke="#8a8a8a" stroke-width="1" stroke-dasharray="1 1"/><path d="M3.5 3.5 L10 10" stroke="#555" stroke-width="1.2"/><rect x="9" y="9" width="2.2" height="2.2" fill="#555"/></svg>
<svg class="s" style="left:0;top:0" width="1920" height="1040"><path d="M60.5 180 V181 M67.5 178 V181 M73.5 180 V181 M80.5 180 V181 M86.5 180 V181 M93.5 180 V181 M99.5 176 V181 M105.5 180 V181 M112.5 180 V181 M118.5 180 V181 M125.5 180 V181 M131.5 178 V181 M138.5 180 V181 M144.5 180 V181 M151.5 180 V181 M157.5 180 V181 M164.5 176 V181 M170.5 180 V181 M177.5 180 V181 M183.5 180 V181 M190.5 180 V181 M196.5 178 V181 M203.5 180 V181 M209.5 180 V181 M216.5 180 V181 M222.5 180 V181 M229.5 176 V181 M235.5 180 V181 M242.5 180 V181 M248.5 180 V181 M255.5 180 V181 M261.5 178 V181 M268.5 180 V181 M274.5 180 V181 M281.5 180 V181 M287.5 180 V181 M294.5 176 V181 M300.5 180 V181 M307.5 180 V181 M313.5 180 V181 M320.5 180 V181 M326.5 178 V181 M333.5 180 V181 M339.5 180 V181 M346.5 180 V181 M352.5 180 V181 M359.5 176 V181 M365.5 180 V181 M372.5 180 V181 M378.5 180 V181 M385.5 180 V181 M391.5 178 V181 M398.5 180 V181 M404.5 180 V181 M411.5 180 V181 M417.5 180 V181 M424.5 176 V181 M430.5 180 V181 M436.5 180 V181 M443.5 180 V181 M449.5 180 V181 M456.5 178 V181 M462.5 180 V181 M469.5 180 V181 M475.5 180 V181 M482.5 180 V181 M488.5 176 V181 M495.5 180 V181 M501.5 180 V181 M508.5 180 V181 M514.5 180 V181 M521.5 178 V181 M527.5 180 V181 M534.5 180 V181 M540.5 180 V181 M547.5 180 V181 M553.5 176 V181 M560.5 180 V181 M566.5 180 V181 M573.5 180 V181 M579.5 180 V181 M586.5 178 V181 M592.5 180 V181 M599.5 180 V181 M605.5 180 V181 M612.5 180 V181 M618.5 176 V181 M625.5 180 V181 M631.5 180 V181 M638.5 180 V181 M644.5 180 V181 M651.5 178 V181 M657.5 180 V181 M664.5 180 V181 M670.5 180 V181 M677.5 180 V181 M683.5 176 V181 M690.5 180 V181 M696.5 180 V181 M703.5 180 V181 M709.5 180 V181 M716.5 178 V181 M722.5 180 V181 M729.5 180 V181 M735.5 180 V181 M742.5 180 V181 M748.5 176 V181 M754.5 180 V181 M761.5 180 V181 M767.5 180 V181 M774.5 180 V181 M780.5 178 V181 M787.5 180 V181 M793.5 180 V181 M800.5 180 V181 M806.5 180 V181 M813.5 176 V181 M819.5 180 V181 M826.5 180 V181 M832.5 180 V181 M839.5 180 V181 M845.5 178 V181 M852.5 180 V181 M858.5 180 V181 M865.5 180 V181 M871.5 180 V181 M878.5 176 V181 M884.5 180 V181 M891.5 180 V181 M897.5 180 V181 M904.5 180 V181 M910.5 178 V181 M917.5 180 V181 M923.5 180 V181 M930.5 180 V181 M936.5 180 V181 M943.5 176 V181 M949.5 180 V181 M956.5 180 V181 M962.5 180 V181 M969.5 180 V181 M975.5 178 V181 M982.5 180 V181 M988.5 180 V181 M995.5 180 V181 M1001.5 180 V181 M1008.5 176 V181 M1014.5 180 V181 M1021.5 180 V181 M1027.5 180 V181 M1034.5 180 V181 M1040.5 178 V181 M1047.5 180 V181 M1053.5 180 V181 M1060.5 180 V181 M1066.5 180 V181 M1073.5 176 V181 M1079.5 180 V181 M1085.5 180 V181 M1092.5 180 V181 M1098.5 180 V181 M1105.5 178 V181 M1111.5 180 V181 M1118.5 180 V181 M1124.5 180 V181 M1131.5 180 V181 M1137.5 176 V181 M1144.5 180 V181 M1150.5 180 V181 M1157.5 180 V181 M1163.5 180 V181 M1170.5 178 V181 M1176.5 180 V181 M1183.5 180 V181 M1189.5 180 V181 M1196.5 180 V181 M1202.5 176 V181 M1209.5 180 V181 M1215.5 180 V181 M1222.5 180 V181 M1228.5 180 V181 M1235.5 178 V181 M1241.5 180 V181 M1248.5 180 V181 M1254.5 180 V181 M1261.5 180 V181 M1267.5 176 V181 M1274.5 180 V181 M1280.5 180 V181 M1287.5 180 V181 M1293.5 180 V181 M1300.5 178 V181 M1306.5 180 V181 M1313.5 180 V181 M1319.5 180 V181 M1326.5 180 V181 M1332.5 176 V181 M1339.5 180 V181 M1345.5 180 V181 M1352.5 180 V181 M1358.5 180 V181 M1365.5 178 V181 M1371.5 180 V181 M1378.5 180 V181 M1384.5 180 V181 M1391.5 180 V181 M1397.5 176 V181 M1403.5 180 V181 M1410.5 180 V181 M1416.5 180 V181 M1423.5 180 V181 M1429.5 178 V181 M1436.5 180 V181 M1442.5 180 V181 M1449.5 180 V181 M1455.5 180 V181 M1462.5 176 V181 M1468.5 180 V181" stroke="#555" stroke-width="1"/>
<path d="M48 190.5 H51 M50 197.5 H51 M50 203.5 H51 M50 210.5 H51 M50 216.5 H51 M46 223.5 H51 M50 229.5 H51 M50 236.5 H51 M50 242.5 H51 M50 249.5 H51 M48 255.5 H51 M50 262.5 H51 M50 268.5 H51 M50 275.5 H51 M50 281.5 H51 M46 288.5 H51 M50 294.5 H51 M50 301.5 H51 M50 307.5 H51 M50 314.5 H51 M48 320.5 H51 M50 327.5 H51 M50 333.5 H51 M50 340.5 H51 M50 346.5 H51 M46 353.5 H51 M50 359.5 H51 M50 366.5 H51 M50 372.5 H51 M50 379.5 H51 M48 385.5 H51 M50 392.5 H51 M50 398.5 H51 M50 405.5 H51 M50 411.5 H51 M46 418.5 H51 M50 424.5 H51 M50 431.5 H51 M50 437.5 H51 M50 444.5 H51 M48 450.5 H51 M50 457.5 H51 M50 463.5 H51 M50 470.5 H51 M50 476.5 H51 M46 483.5 H51 M50 489.5 H51 M50 495.5 H51 M50 502.5 H51 M50 508.5 H51 M48 515.5 H51 M50 521.5 H51 M50 528.5 H51 M50 534.5 H51 M50 541.5 H51 M46 547.5 H51 M50 554.5 H51 M50 560.5 H51 M50 567.5 H51 M50 573.5 H51 M48 580.5 H51 M50 586.5 H51 M50 593.5 H51 M50 599.5 H51 M50 606.5 H51 M46 612.5 H51 M50 619.5 H51 M50 625.5 H51 M50 632.5 H51 M50 638.5 H51 M48 645.5 H51 M50 651.5 H51 M50 658.5 H51 M50 664.5 H51 M50 671.5 H51 M46 677.5 H51 M50 684.5 H51 M50 690.5 H51 M50 697.5 H51 M50 703.5 H51 M48 710.5 H51 M50 716.5 H51 M50 723.5 H51 M50 729.5 H51 M50 736.5 H51 M46 742.5 H51 M50 749.5 H51 M50 755.5 H51 M50 762.5 H51 M50 768.5 H51 M48 775.5 H51 M50 781.5 H51 M50 788.5 H51 M50 794.5 H51 M50 801.5 H51 M46 807.5 H51 M50 813.5 H51 M50 820.5 H51 M50 826.5 H51 M50 833.5 H51 M48 839.5 H51 M50 846.5 H51 M50 852.5 H51 M50 859.5 H51 M50 865.5 H51 M46 872.5 H51 M50 878.5 H51 M50 885.5 H51 M50 891.5 H51 M50 898.5 H51 M48 904.5 H51 M50 911.5 H51 M50 917.5 H51 M50 924.5 H51 M50 930.5 H51 M46 937.5 H51" stroke="#555" stroke-width="1"/></svg>
<div class="r" style="left:36px;top:183px;width:17px;height:1px;background:#f2f2f2;"></div>
<div class="t" style="left:94.33px;top:166.73px;font-size:9.3px;color:#8a8a8a;">10</div>
<div class="t" style="left:159.33px;top:166.73px;font-size:9.3px;color:#8a8a8a;">20</div>
<div class="t" style="left:224.33px;top:166.73px;font-size:9.3px;color:#8a8a8a;">30</div>
<div class="t" style="left:289.33px;top:166.73px;font-size:9.3px;color:#8a8a8a;">40</div>
<div class="t" style="left:354.33px;top:166.73px;font-size:9.3px;color:#8a8a8a;">50</div>
<div class="t" style="left:419.33px;top:166.73px;font-size:9.3px;color:#8a8a8a;">60</div>
<div class="t" style="left:483.33px;top:166.73px;font-size:9.3px;color:#8a8a8a;">70</div>
<div class="t" style="left:548.33px;top:166.73px;font-size:9.3px;color:#8a8a8a;">80</div>
<div class="t" style="left:613.33px;top:166.73px;font-size:9.3px;color:#8a8a8a;">90</div>
<div class="t" style="left:675.74px;top:166.73px;font-size:9.3px;color:#8a8a8a;">100</div>
<div class="t" style="left:740.74px;top:166.73px;font-size:9.3px;color:#8a8a8a;">110</div>
<div class="t" style="left:805.74px;top:166.73px;font-size:9.3px;color:#8a8a8a;">120</div>
<div class="t" style="left:870.74px;top:166.73px;font-size:9.3px;color:#8a8a8a;">130</div>
<div class="t" style="left:935.74px;top:166.73px;font-size:9.3px;color:#8a8a8a;">140</div>
<div class="t" style="left:1000.74px;top:166.73px;font-size:9.3px;color:#8a8a8a;">150</div>
<div class="t" style="left:1065.74px;top:166.73px;font-size:9.3px;color:#8a8a8a;">160</div>
<div class="t" style="left:1129.74px;top:166.73px;font-size:9.3px;color:#8a8a8a;">170</div>
<div class="t" style="left:1194.74px;top:166.73px;font-size:9.3px;color:#8a8a8a;">180</div>
<div class="t" style="left:1259.74px;top:166.73px;font-size:9.3px;color:#8a8a8a;">190</div>
<div class="t" style="left:1324.74px;top:166.73px;font-size:9.3px;color:#8a8a8a;">200</div>
<div class="t" style="left:1389.74px;top:166.73px;font-size:9.3px;color:#8a8a8a;">210</div>
<div class="t" style="left:1423.00px;top:166.73px;font-size:9.3px;color:#8a8a8a;transform:scaleX(1.0578);transform-origin:0 0;">millimeters</div>
<div class="t" style="left:37.5px;top:231.2px;font-size:9.3px;color:#8a8a8a;transform:rotate(-90deg);transform-origin:0 0;">270</div>
<div class="t" style="left:37.5px;top:296.1px;font-size:9.3px;color:#8a8a8a;transform:rotate(-90deg);transform-origin:0 0;">260</div>
<div class="t" style="left:37.5px;top:361.0px;font-size:9.3px;color:#8a8a8a;transform:rotate(-90deg);transform-origin:0 0;">250</div>
<div class="t" style="left:37.5px;top:425.9px;font-size:9.3px;color:#8a8a8a;transform:rotate(-90deg);transform-origin:0 0;">240</div>
<div class="t" style="left:37.5px;top:490.8px;font-size:9.3px;color:#8a8a8a;transform:rotate(-90deg);transform-origin:0 0;">230</div>
<div class="t" style="left:37.5px;top:555.7px;font-size:9.3px;color:#8a8a8a;transform:rotate(-90deg);transform-origin:0 0;">220</div>
<div class="t" style="left:37.5px;top:620.6px;font-size:9.3px;color:#8a8a8a;transform:rotate(-90deg);transform-origin:0 0;">210</div>
<div class="t" style="left:37.5px;top:685.5px;font-size:9.3px;color:#8a8a8a;transform:rotate(-90deg);transform-origin:0 0;">200</div>
<div class="t" style="left:37.5px;top:750.4px;font-size:9.3px;color:#8a8a8a;transform:rotate(-90deg);transform-origin:0 0;">190</div>
<div class="t" style="left:37.5px;top:815.3px;font-size:9.3px;color:#8a8a8a;transform:rotate(-90deg);transform-origin:0 0;">180</div>
<div class="t" style="left:38px;top:940px;font-size:9.3px;color:#8a8a8a;transform:rotate(-90deg);transform-origin:0 0;">millimeters</div>
<svg class="s" style="left:53px;top:183px" width="1422" height="742" viewBox="53 183 1422 742"><rect x="53" y="183" width="1382" height="742" fill="#c6c3e0"/><path d="M681 925 L1435 710 V925 Z" fill="#ffffff"/><rect x="1435" y="183" width="6" height="742" fill="#bfbfbf"/></svg>
<div class="r" style="left:102px;top:550px;width:762px;height:7px;background:#26fd9d;"></div>
<div class="r" style="left:864px;top:287px;width:417px;height:630px;background:#9ec0de;"></div>
<div class="r" style="left:863px;top:287px;width:1px;height:630px;background:#dadbea;"></div>
<div class="r" style="left:1280px;top:287px;width:1px;height:630px;background:#a4c6e8;"></div>
<div class="r" style="left:864px;top:550px;width:50px;height:7px;background:#1ee3bc;"></div>
<svg class="s" style="left:990px;top:530px" width="170" height="150" viewBox="990 530 170 150"><rect x="997.2" y="538.2" width="154.4" height="132" rx="3.5" fill="none" stroke="#bfe1fb" stroke-width="4.2"/><circle cx="1116.7" cy="574.3" r="11.8" fill="none" stroke="#bfe1fb" stroke-width="3"/><path d="M997 622 L1046.5 588.5 L1087 624" fill="none" stroke="#bfe1fb" stroke-width="3"/><path d="M1036 670 L1106.7 607.5 L1151 639.5" fill="none" stroke="#bfe1fb" stroke-width="3"/></svg>
<svg class="s" style="left:170px;top:217px" width="146" height="146" viewBox="170 217 146 146"><circle cx="243" cy="290.5" r="71" fill="#ffffff"/><g id="leafs"></g></svg>
<svg class="s" style="left:170px;top:217px" width="146" height="146" viewBox="170 217 146 146"><path d="M236.94 256.50 Q231.58 233.78 209.23 240.50 Q214.58 263.22 236.94 256.50 Z" fill="#d9f8c4" fill-opacity="1.0"/><path d="M236.00 260.00 Q219.00 243.00 202.00 260.00 Q219.00 277.00 236.00 260.00 Z" fill="#d9f8c4" fill-opacity="1.0"/><path d="M239.46 256.46 Q239.46 235.25 218.25 235.25 Q218.25 256.46 239.46 256.46 Z" fill="#45d353" fill-opacity="0.95"/><path d="M237.23 258.35 Q228.59 241.31 212.24 251.18 Q220.88 268.22 237.23 258.35 Z" fill="#cdbff3" fill-opacity="0.9"/><path d="M238.22 261.46 Q219.49 251.50 209.53 270.23 Q228.26 280.19 238.22 261.46 Z" fill="#45d353" fill-opacity="0.95"/><path d="M239.93 263.29 Q219.80 264.35 220.15 284.50 Q240.28 283.44 239.93 263.29 Z" fill="#cdbff3" fill-opacity="0.95"/><path d="M238.32 254.80 Q238.83 244.91 228.95 244.39 Q228.43 254.28 238.32 254.80 Z" fill="#1f9d3a" fill-opacity="0.8"/><path d="M236.42 262.39 Q227.45 258.21 223.27 267.18 Q232.24 271.37 236.42 262.39 Z" fill="#1f9d3a" fill-opacity="0.8"/><path d="M240.46 254.56 Q242.52 244.78 233.70 240.06 Q231.65 249.85 240.46 254.56 Z" fill="#8b6fdc" fill-opacity="1.0"/><path d="M234.00 260.00 Q228.00 254.00 222.00 260.00 Q228.00 266.00 234.00 260.00 Z" fill="#8b6fdc" fill-opacity="1.0"/><path d="M239.71 266.18 Q230.66 270.43 232.20 280.31 Q241.26 276.06 239.71 266.18 Z" fill="#8b6fdc" fill-opacity="1.0"/><path d="M195.11 246.75 Q198.63 254.58 206.89 252.25 Q203.37 244.42 195.11 246.75 Z" fill="#45d353" fill-opacity="1.0"/><path d="M205.68 282.73 Q214.21 283.59 216.32 275.27 Q207.79 274.41 205.68 282.73 Z" fill="#45d353" fill-opacity="1.0"/><path d="M249.06 256.50 Q271.42 263.22 276.77 240.50 Q254.42 233.78 249.06 256.50 Z" fill="#d9f8c4" fill-opacity="1.0"/><path d="M250.00 260.00 Q267.00 277.00 284.00 260.00 Q267.00 243.00 250.00 260.00 Z" fill="#d9f8c4" fill-opacity="1.0"/><path d="M246.54 256.46 Q267.75 256.46 267.75 235.25 Q246.54 235.25 246.54 256.46 Z" fill="#45d353" fill-opacity="0.95"/><path d="M248.77 258.35 Q265.12 268.22 273.76 251.18 Q257.41 241.31 248.77 258.35 Z" fill="#cdbff3" fill-opacity="0.9"/><path d="M247.78 261.46 Q257.74 280.19 276.47 270.23 Q266.51 251.50 247.78 261.46 Z" fill="#45d353" fill-opacity="0.95"/><path d="M246.07 263.29 Q245.72 283.44 265.85 284.50 Q266.20 264.35 246.07 263.29 Z" fill="#cdbff3" fill-opacity="0.95"/><path d="M247.68 254.80 Q257.57 254.28 257.05 244.39 Q247.17 244.91 247.68 254.80 Z" fill="#1f9d3a" fill-opacity="0.8"/><path d="M249.58 262.39 Q253.76 271.37 262.73 267.18 Q258.55 258.21 249.58 262.39 Z" fill="#1f9d3a" fill-opacity="0.8"/><path d="M245.54 254.56 Q254.35 249.85 252.30 240.06 Q243.48 244.78 245.54 254.56 Z" fill="#8b6fdc" fill-opacity="1.0"/><path d="M252.00 260.00 Q258.00 266.00 264.00 260.00 Q258.00 254.00 252.00 260.00 Z" fill="#8b6fdc" fill-opacity="1.0"/><path d="M246.29 266.18 Q244.74 276.06 253.80 280.31 Q255.34 270.43 246.29 266.18 Z" fill="#8b6fdc" fill-opacity="1.0"/><path d="M279.11 252.25 Q287.37 254.58 290.89 246.75 Q282.63 244.42 279.11 252.25 Z" fill="#45d353" fill-opacity="1.0"/><path d="M269.68 275.27 Q271.79 283.59 280.32 282.73 Q278.21 274.41 269.68 275.27 Z" fill="#45d353" fill-opacity="1.0"/><circle cx="243" cy="260" r="11.5" fill="#fff"/><path d="M238 258 Q244 255 248 262 Q244 260 243 265 Q241 275 245 290 Q238 278 240 266 Q240 261 238 258 Z" fill="#8b6fdc" fill-opacity="0.85"/><path d="M230.87 337.60 Q246.21 332.16 242.13 316.40 Q226.79 321.84 230.87 337.60 Z" fill="#45d353" fill-opacity="1.0"/><path d="M243.87 316.40 Q239.79 332.16 255.13 337.60 Q259.21 321.84 243.87 316.40 Z" fill="#45d353" fill-opacity="1.0"/><path d="M232.77 344.95 Q245.83 341.69 241.23 329.05 Q228.17 332.31 232.77 344.95 Z" fill="#d9f8c4" fill-opacity="1.0"/><path d="M244.77 329.05 Q240.17 341.69 253.23 344.95 Q257.83 332.31 244.77 329.05 Z" fill="#d9f8c4" fill-opacity="1.0"/><path d="M243.00 313.00 Q236.60 323.00 243.00 333.00 Q249.40 323.00 243.00 313.00 Z" fill="#cdbff3" fill-opacity="1.0"/><path d="M243.00 313.00 Q238.60 318.00 243.00 323.00 Q247.40 318.00 243.00 313.00 Z" fill="#8b6fdc" fill-opacity="1.0"/><path d="M243.00 342.00 Q237.80 349.50 243.00 357.00 Q248.20 349.50 243.00 342.00 Z" fill="#45d353" fill-opacity="1.0"/></svg>
<div class="t" style="left:184px;top:284.3px;font-size:28px;color:#8b6fdc;letter-spacing:0.6px;transform:scaleX(1.35);-webkit-text-stroke:0.7px #8b6fdc;transform-origin:0 0;">ascent</div>
<div class="t" style="left:172.00px;top:381.40px;font-size:56px;color:#ffffff;transform:scaleX(1.0251);transform-origin:0 0;-webkit-text-stroke:0.6px #fff;">Monthly</div>
<div class="t" style="left:177.00px;top:447.75px;font-size:87px;color:#ffffff;transform:scaleX(0.9651);transform-origin:0 0;-webkit-text-stroke:1.5px #fff;">Newsletter</div>
<div class="t" style="left:172.90px;top:591.50px;font-size:15px;color:#ffffff;transform:scaleX(1.0194);transform-origin:0 0;">Curated by</div>
<div class="t" style="left:380.40px;top:591.50px;font-size:15px;color:#ffffff;transform:scaleX(1.0146);transform-origin:0 0;">Designed by</div>
<div class="t" style="left:173.00px;top:613.59px;font-size:19.5px;color:#ffffff;transform:scaleX(0.9386);transform-origin:0 0;">Pam Roberts</div>
<div class="t" style="left:380.60px;top:613.59px;font-size:19.5px;color:#ffffff;transform:scaleX(0.9442);transform-origin:0 0;">Brent Lewis</div>
<div class="t" style="left:172.00px;top:639.19px;font-size:19.5px;color:#ffffff;transform:scaleX(1.0476);transform-origin:0 0;">Marketing Manager</div>
<div class="t" style="left:380.60px;top:639.19px;font-size:19.5px;color:#ffffff;transform:scaleX(1.0070);transform-origin:0 0;">Senior Designer</div>
<div class="t" style="left:177.90px;top:702.53px;font-size:23px;color:#ffffff;transform:scaleX(1.0319);transform-origin:0 0;">Welcome to the June edition of our corporate</div>
<div class="t" style="left:177.90px;top:730.33px;font-size:23px;color:#ffffff;transform:scaleX(1.0155);transform-origin:0 0;">newsletter. We have exciting news to share about</div>
<div class="t" style="left:177.90px;top:757.03px;font-size:23px;color:#ffffff;transform:scaleX(1.0285);transform-origin:0 0;">our employee wellness program, milestones to</div>
<div class="t" style="left:177.90px;top:785.13px;font-size:23px;color:#ffffff;transform:scaleX(1.0096);transform-origin:0 0;">celebrate, sales wins and of course, some special</div>
<div class="t" style="left:177.90px;top:811.83px;font-size:23px;color:#ffffff;transform:scaleX(1.0309);transform-origin:0 0;">employees to highlight this month.</div>
<div class="r" style="left:928px;top:219px;width:295px;height:63px;background:rgba(0,0,0,0.35);filter:blur(1.5px);"></div>
<div class="r" style="left:925px;top:216px;width:295px;height:63px;background:#f2f2f2;"></div>
<div class="r" style="left:927px;top:224.7px;width:3px;height:3px;background:#1a1a1a;border-radius:1px;"></div>
<div class="t" style="left:935.00px;top:219.70px;font-size:13px;color:#050505;transform:scaleX(1.0152);transform-origin:0 0;">Ignore PowerClip frame and place object here</div>
<div class="r" style="left:927px;top:246.9px;width:3px;height:3px;background:#1a1a1a;border-radius:1px;"></div>
<div class="t" style="left:935.00px;top:241.90px;font-size:13px;color:#050505;transform:scaleX(1.0274);transform-origin:0 0;">Hold (W) to add to PowerClip frame</div>
<div class="r" style="left:927px;top:268.7px;width:3px;height:3px;background:#1a1a1a;border-radius:1px;"></div>
<div class="t" style="left:935.00px;top:263.70px;font-size:13px;color:#050505;transform:scaleX(1.0152);transform-origin:0 0;">Hold (K) to replace existing contents</div>
<svg class="s" style="left:955px;top:455px" width="34" height="44" viewBox="955 455 34 44"><path d="M959.5 458.5 V476 L963.5 472.5 L966.5 480 L969 479 L966.5 471.5 H972 Z" fill="#fff" stroke="#000" stroke-width="1.3" stroke-linejoin="miter"/><path d="M962 479 H977 V489 H962 Z" fill="none" stroke="#fff" stroke-width="2"/><path d="M962 479 H977 V489 H962 Z" fill="none" stroke="#000" stroke-width="2" stroke-dasharray="1.5 1.5"/><rect x="971.5" y="483.5" width="13" height="13" fill="#fff" stroke="#000" stroke-width="1.6"/><path d="M978 486.5 V493.5 M974.5 490 H981.5" stroke="#000" stroke-width="1.1"/></svg>
<div class="r" style="left:1456px;top:390px;width:18px;height:138px;background:#cbcbcb;"></div>
<div class="r" style="left:1456px;top:184px;width:19px;height:21px;background:#f0f0f0;"></div>
<svg class="s" style="left:1460px;top:190px;" width="11" height="8" viewBox="0 0 11 8"><path d="M1 6.5 L5.5 2 L10 6.5" fill="none" stroke="#444" stroke-width="1.6"/></svg>
<div class="r" style="left:1456px;top:903px;width:19px;height:22px;background:#f0f0f0;"></div>
<svg class="s" style="left:1460px;top:910px;" width="11" height="8" viewBox="0 0 11 8"><path d="M1 1.5 L5.5 6 L10 1.5" fill="none" stroke="#444" stroke-width="1.6"/></svg>
<div class="r" style="left:53px;top:925px;width:1422px;height:20px;background:#ffffff;"></div>
<div class="r" style="left:53px;top:925px;width:22px;height:20px;background:#f0f0f0;"></div>
<svg class="s" style="left:59px;top:930px;" width="8" height="11" viewBox="0 0 8 11"><path d="M6.5 1 L2 5.5 L6.5 10" fill="none" stroke="#444" stroke-width="1.6"/></svg>
<div class="r" style="left:455px;top:927px;width:618px;height:17px;background:#cbcbcb;"></div>
<div class="r" style="left:1434px;top:925px;width:20px;height:20px;background:#f0f0f0;"></div>
<svg class="s" style="left:1440px;top:930px;" width="8" height="11" viewBox="0 0 8 11"><path d="M1.5 1 L6 5.5 L1.5 10" fill="none" stroke="#444" stroke-width="1.6"/></svg>
<div class="r" style="left:1455px;top:925px;width:20px;height:20px;background:#f0f0f0;"></div>
<svg class="s" style="left:1456px;top:926px;" width="18" height="18" viewBox="0 0 18 18"><circle cx="7.5" cy="7.5" r="6" fill="none" stroke="#333" stroke-width="1.3"/><path d="M12 12 L16.5 16.5" stroke="#333" stroke-width="2"/><path d="M7.5 4 V11 M4 7.5 H11" stroke="#333" stroke-width="1" stroke-dasharray="1.5 1"/></svg>
<svg class="s" style="left:44px;top:953px;" width="11" height="11" viewBox="0 0 11 11"><path d="M5.5 0 V11 M0 5.5 H11" stroke="#333" stroke-width="1.6"/></svg>
<svg class="s" style="left:70px;top:953px;" width="12" height="12" viewBox="0 0 12 12"><path d="M1 0.5 V11.5" stroke="#b5b5b5" stroke-width="2"/><path d="M11.5 0.5 V11.5 L3.5 6 Z" fill="#b5b5b5"/></svg>
<svg class="s" style="left:100px;top:953px;" width="9" height="12" viewBox="0 0 9 12"><path d="M8.5 0.5 V11.5 L0.5 6 Z" fill="#b5b5b5"/></svg>
<div class="t" style="left:126.00px;top:953.40px;font-size:13px;color:#8a8a8a;">1</div>
<div class="t" style="left:140.00px;top:953.40px;font-size:13px;color:#8a8a8a;">of</div>
<div class="t" style="left:158.00px;top:953.40px;font-size:13px;color:#8a8a8a;">4</div>
<svg class="s" style="left:183px;top:953px;" width="9" height="12" viewBox="0 0 9 12"><path d="M0.5 0.5 V11.5 L8.5 6 Z" fill="#222"/></svg>
<svg class="s" style="left:209px;top:953px;" width="13" height="12" viewBox="0 0 13 12"><path d="M0.5 0.5 V11.5 L8.5 6 Z" fill="#222"/><path d="M11 0.5 V11.5" stroke="#222" stroke-width="2"/></svg>
<svg class="s" style="left:237px;top:953px;" width="11" height="11" viewBox="0 0 11 11"><path d="M5.5 0 V11 M0 5.5 H11" stroke="#333" stroke-width="1.6"/></svg>
<div class="r" style="left:256px;top:945px;width:125px;height:28px;background:#d9d9d9;"></div>
<div class="t" style="left:302.20px;top:953.40px;font-size:13px;color:#050505;transform:scaleX(0.9927);transform-origin:0 0;">1: 1-2</div>
<div class="r" style="left:381px;top:948px;width:1px;height:24px;background:#d8d8d8;"></div>
<div class="r" style="left:507px;top:948px;width:1px;height:24px;background:#d8d8d8;"></div>
<div class="r" style="left:633px;top:948px;width:1px;height:24px;background:#d8d8d8;"></div>
<div class="r" style="left:759px;top:948px;width:1px;height:24px;background:#d8d8d8;"></div>
<div class="t" style="left:424.50px;top:953.40px;font-size:13px;color:#050505;transform:scaleX(0.9465);transform-origin:0 0;">Page 2</div>
<div class="t" style="left:550.50px;top:953.40px;font-size:13px;color:#050505;transform:scaleX(0.9465);transform-origin:0 0;">Page 3</div>
<div class="t" style="left:676.50px;top:953.40px;font-size:13px;color:#050505;transform:scaleX(0.9465);transform-origin:0 0;">Page 4</div>
<div class="r" style="left:36px;top:973px;width:1441px;height:1px;background:#e0e0e0;"></div>
<svg class="s" style="left:38px;top:976px" width="8" height="20"><g fill="#b0b0b0"><rect x="1" y="0" width="1" height="1"/><rect x="1" y="2" width="1" height="1"/><rect x="1" y="4" width="1" height="1"/><rect x="1" y="6" width="1" height="1"/><rect x="1" y="8" width="1" height="1"/><rect x="1" y="10" width="1" height="1"/><rect x="1" y="12" width="1" height="1"/><rect x="1" y="14" width="1" height="1"/><rect x="1" y="16" width="1" height="1"/><rect x="1" y="18" width="1" height="1"/><rect x="3" y="1" width="1" height="1"/><rect x="3" y="3" width="1" height="1"/><rect x="3" y="5" width="1" height="1"/><rect x="3" y="7" width="1" height="1"/><rect x="3" y="9" width="1" height="1"/><rect x="3" y="11" width="1" height="1"/><rect x="3" y="13" width="1" height="1"/><rect x="3" y="15" width="1" height="1"/><rect x="3" y="17" width="1" height="1"/><rect x="3" y="19" width="1" height="1"/><rect x="1" y="0" width="1" height="1"/><rect x="1" y="2" width="1" height="1"/><rect x="1" y="4" width="1" height="1"/><rect x="1" y="6" width="1" height="1"/><rect x="1" y="8" width="1" height="1"/><rect x="1" y="10" width="1" height="1"/><rect x="1" y="12" width="1" height="1"/><rect x="1" y="14" width="1" height="1"/><rect x="1" y="16" width="1" height="1"/><rect x="1" y="18" width="1" height="1"/><rect x="3" y="1" width="1" height="1"/><rect x="3" y="3" width="1" height="1"/><rect x="3" y="5" width="1" height="1"/><rect x="3" y="7" width="1" height="1"/><rect x="3" y="9" width="1" height="1"/><rect x="3" y="11" width="1" height="1"/><rect x="3" y="13" width="1" height="1"/><rect x="3" y="15" width="1" height="1"/><rect x="3" y="17" width="1" height="1"/><rect x="3" y="19" width="1" height="1"/></g></svg>
<svg class="s" style="left:53px;top:982px;" width="7" height="10" viewBox="0 0 7 10"><path d="M0.5 0.5 V9.5 L6 5 Z" fill="#555"/></svg>
<svg class="s" style="left:70px;top:977px;" width="18" height="18" viewBox="0 0 18 18"><path d="M11 1.5 Q13 -0.5 15.5 1.5 Q18 4 16 6.5 L14 8.5 L9.5 4 Z" fill="#222"/><path d="M10.5 5 L13 7.5 L4 16.5 Q2.5 17.5 1.2 16.5 Q0.5 15.5 1.5 14 Z" fill="#fff" stroke="#222" stroke-width="1.2"/><path d="M2 14.5 L7 10 L8.5 11 L3.5 16 Z" fill="#f26a0a"/></svg>
<svg class="s" style="left:96px;top:980px;" width="9" height="14" viewBox="0 0 9 14"><path d="M8 1 L2 7 L8 13" fill="none" stroke="#c8c8c8" stroke-width="1.8"/></svg>
<svg class="s" style="left:112px;top:975px" width="1303" height="22"><rect x="0" y="0" width="1303" height="22" fill="#555"/><rect x="1" y="1" width="20" height="20" fill="#4d4d4d"/><path d="M4 19 L18 3" stroke="#d01018" stroke-width="1"/><rect x="22" y="1" width="20" height="20" fill="#f7abac"/><rect x="43" y="1" width="20" height="20" fill="#efe3e3"/><rect x="64" y="1" width="20" height="20" fill="#dac2c2"/><rect x="85" y="1" width="20" height="20" fill="#e8b8b8"/><rect x="106" y="1" width="20" height="20" fill="#f8e2e2"/><rect x="127" y="1" width="20" height="20" fill="#f6cdce"/><rect x="148" y="1" width="20" height="20" fill="#f9e4e4"/><rect x="169" y="1" width="20" height="20" fill="#f58220"/><rect x="190" y="1" width="20" height="20" fill="#a6a8ab"/><rect x="211" y="1" width="20" height="20" fill="#ed1c24"/><rect x="232" y="1" width="20" height="20" fill="#a11d21"/><rect x="253" y="1" width="20" height="20" fill="#ee2a24"/><rect x="274" y="1" width="20" height="20" fill="#f06567"/><rect x="295" y="1" width="20" height="20" fill="#fdc652"/><rect x="316" y="1" width="20" height="20" fill="#231f20"/><rect x="337" y="1" width="20" height="20" fill="#f9a24c"/><rect x="358" y="1" width="20" height="20" fill="#f58a4a"/><rect x="379" y="1" width="20" height="20" fill="#f6896d"/><rect x="400" y="1" width="20" height="20" fill="#f48a7c"/><rect x="421" y="1" width="20" height="20" fill="#fbbf8f"/><rect x="442" y="1" width="20" height="20" fill="#8fa58f"/><rect x="463" y="1" width="20" height="20" fill="#4898a5"/><rect x="484" y="1" width="20" height="20" fill="#7fa1a3"/><rect x="505" y="1" width="20" height="20" fill="#88776f"/><rect x="526" y="1" width="20" height="20" fill="#b05b80"/><rect x="547" y="1" width="20" height="20" fill="#85425f"/><rect x="568" y="1" width="20" height="20" fill="#c39a71"/><rect x="589" y="1" width="20" height="20" fill="#6b4a2e"/><rect x="610" y="1" width="20" height="20" fill="#a8622a"/><rect x="631" y="1" width="20" height="20" fill="#4b2e14"/><rect x="652" y="1" width="20" height="20" fill="#f89c7e"/><rect x="673" y="1" width="20" height="20" fill="#040404"/><rect x="694" y="1" width="20" height="20" fill="#340f08"/><rect x="715" y="1" width="20" height="20" fill="#a98463"/><rect x="736" y="1" width="20" height="20" fill="#220000"/><rect x="757" y="1" width="20" height="20" fill="#f9bfa9"/><rect x="778" y="1" width="20" height="20" fill="#f9ac90"/><rect x="799" y="1" width="20" height="20" fill="#fccebe"/><rect x="820" y="1" width="20" height="20" fill="#434e58"/><rect x="841" y="1" width="20" height="20" fill="#86191d"/><rect x="862" y="1" width="20" height="20" fill="#00aeef"/><rect x="883" y="1" width="20" height="20" fill="#2e3192"/><rect x="904" y="1" width="20" height="20" fill="#627896"/><rect x="925" y="1" width="20" height="20" fill="#4f4a6b"/><rect x="946" y="1" width="20" height="20" fill="#ffffff"/><rect x="967" y="1" width="20" height="20" fill="#ffffff"/><rect x="988" y="1" width="20" height="20" fill="#808285"/><rect x="1009" y="1" width="20" height="20" fill="#e6e7e9"/><rect x="1030" y="1" width="20" height="20" fill="#0050a0"/><rect x="1051" y="1" width="20" height="20" fill="#883c96"/><rect x="1072" y="1" width="20" height="20" fill="#f47265"/><rect x="1093" y="1" width="20" height="20" fill="#2a5ca4"/><rect x="1114" y="1" width="20" height="20" fill="#26fc9f"/><rect x="1135" y="1" width="20" height="20" fill="#a24885"/><rect x="1156" y="1" width="20" height="20" fill="#230000"/><rect x="1177" y="1" width="20" height="20" fill="#ffffff"/><rect x="1198" y="1" width="20" height="20" fill="#2727ff"/><rect x="1219" y="1" width="20" height="20" fill="#404040"/><rect x="1240" y="1" width="20" height="20" fill="#bfbab8"/><rect x="1261" y="1" width="20" height="20" fill="#26fc9f"/><path d="M1261 1 H1271 L1261 11 Z" fill="#fff"/><path d="M1261 11 L1271 1" stroke="#111" stroke-width="1.3"/><rect x="1282" y="1" width="20" height="20" fill="#c5c3e0"/></svg>
<svg class="s" style="left:1429px;top:979px;" width="12" height="16" viewBox="0 0 12 16"><path d="M2 1.5 L9 8 L2 14.5" fill="none" stroke="#c8c8c8" stroke-width="1.8"/></svg>
<svg class="s" style="left:1451px;top:982px;" width="14" height="11" viewBox="0 0 14 11"><path d="M1 1 L5.5 5.5 L1 10 M7 1 L11.5 5.5 L7 10" fill="none" stroke="#b8b8b8" stroke-width="1.5"/></svg>
<svg class="s" style="left:11px;top:1009px;" width="22" height="22" viewBox="0 0 22 22"><path d="M19.80 11.99 L19.22 13.86 L16.05 14.08 L15.14 15.18 L15.53 18.33 L13.79 19.25 L11.40 17.16 L9.97 17.30 L8.01 19.80 L6.14 19.22 L5.92 16.05 L4.82 15.14 L1.67 15.53 L0.75 13.79 L2.84 11.40 L2.70 9.97 L0.20 8.01 L0.78 6.14 L3.95 5.92 L4.86 4.82 L4.47 1.67 L6.21 0.75 L8.60 2.84 L10.03 2.70 L11.99 0.20 L13.86 0.78 L14.08 3.95 L15.18 4.86 L18.33 4.47 L19.25 6.21 L17.16 8.60 L17.30 10.03 Z" fill="#333"/><circle cx="10.0" cy="10.0" r="4.2" fill="#f2f2f2"/><path d="M16 22 L22 16 V22 Z" fill="#777"/></svg>
<div class="t" style="left:40.00px;top:1013.80px;font-size:13px;color:#050505;transform:scaleX(1.0053);transform-origin:0 0;">Next click for Drag/Scale; Second click for Rotate/Skew; Dbl-clicking tool selects all objects; Shift+click multi-selects; Alt+click digs</div>
<svg class="s" style="left:1322px;top:1009px;" width="22" height="22" viewBox="0 0 22 22"><path d="M1.5 9.5 L9.5 1.5 L17.5 9.5 L9.5 17.5 Z" fill="#fff" stroke="#333" stroke-width="1.6"/><path d="M5 10 H14 L9.5 14 Z" fill="#e8101a"/><path d="M15 21 L21 14 V21 Z" fill="#e8101a"/></svg>
<div class="r" style="left:1346px;top:1006px;width:26px;height:25px;background:#ffffff;box-sizing:border-box;border:1px solid #b9b9b9;"></div>
<svg class="s" style="left:1346px;top:1006px;" width="26" height="25" viewBox="0 0 26 25"><path d="M3 23 L23 2" stroke="#e8101a" stroke-width="1.6"/></svg>
<div class="t" style="left:1376.00px;top:1013.50px;font-size:13px;color:#050505;transform:scaleX(1.0297);transform-origin:0 0;">None</div>
<svg class="s" style="left:1579px;top:1008px;" width="12" height="22" viewBox="0 0 12 22"><path d="M6 1 L10.5 10 L8.5 12 H3.5 L1.5 10 Z" fill="none" stroke="#333" stroke-width="1.2"/><path d="M6 1 V9" stroke="#333"/><rect x="3.5" y="13.5" width="5" height="6" fill="none" stroke="#333" stroke-width="1.3"/></svg>
<div class="r" style="left:1596px;top:1007px;width:25px;height:25px;background:#1f1f1f;box-sizing:border-box;border:1px solid #555;"></div>
<div class="t" style="left:1626.00px;top:1013.50px;font-size:13px;color:#050505;transform:scaleX(0.9864);transform-origin:0 0;">C0 M0 Y0 K100  0.567 pt</div>
<div class="r" style="left:1878px;top:1005px;width:1px;height:30px;background:#d0d0d0;"></div>
<svg class="s" style="left:1888px;top:1007px;" width="22" height="21" viewBox="0 0 22 21"><rect x="1" y="1" width="20" height="15" fill="#e8101a" stroke="#333" stroke-width="1.2"/><rect x="1.6" y="8.5" width="18.8" height="7" fill="#1e90ff"/><circle cx="11" cy="8.5" r="2.5" fill="#fff" stroke="#333" stroke-width="1"/><path d="M7 19 H15 M11 16 V19" stroke="#333" stroke-width="1.5"/></svg>
<div class="t" style="left:1486.00px;top:147.87px;font-size:13.5px;color:#050505;transform:scaleX(0.9395);transform-origin:0 0;">Objects</div>
<svg class="s" style="left:1850px;top:148px;" width="14" height="12" viewBox="0 0 14 12"><path d="M0.5 0.5 L6 6 L0.5 11.5 Z M7.5 0.5 L13 6 L7.5 11.5 Z" fill="#b0b0b0"/></svg>
<svg class="s" style="left:1875px;top:148px;" width="12" height="12" viewBox="0 0 12 12"><path d="M0.5 0.5 L11.5 11.5 M11.5 0.5 L0.5 11.5" stroke="#a0a0a0" stroke-width="1.5"/></svg>
<div class="r" style="left:1481px;top:175px;width:387px;height:28px;background:#ffffff;box-sizing:border-box;border:1px solid #ababab;"></div>
<div class="t" style="left:1486.00px;top:182.07px;font-size:13.5px;color:#666666;transform:scaleX(0.8884);transform-origin:0 0;">Search</div>
<div class="r" style="left:1481px;top:208px;width:28px;height:28px;background:#f0f0f0;box-sizing:border-box;border:1px solid #a8a8a8;"></div>
<svg class="s" style="left:1484px;top:211px;" width="22" height="22" viewBox="0 0 22 22"><path d="M5 3.5 L7.5 1 H16 V7" fill="none" stroke="#222" stroke-width="1.3"/><path d="M3.5 4 V18.5 H9" fill="none" stroke="#222" stroke-width="1.3"/><path d="M5 3.5 H7.5 V1" fill="#222" stroke="#222"/><path d="M15 9 L20 12 L15 15 L10 12 Z" fill="#fff" stroke="#222" stroke-width="1.2"/><path d="M10 15 L15 18 L20 15 L15 21 Z" fill="#222"/><path d="M10 15 L15 12.5 L20 15 L15 18 Z" fill="#222"/></svg>
<svg class="s" style="left:1517px;top:212px;" width="22" height="22" viewBox="0 0 22 22"><path d="M11 1 L20 6.5 L11 12 L2 6.5 Z" fill="#fff" stroke="#222" stroke-width="1.4"/><path d="M2 12 L11 17.5 L20 12 L11 8 Z" fill="#222"/><path d="M2 12 L11 21 L20 12 L11 17 Z" fill="#222"/></svg>
<div class="t" style="left:1547.00px;top:215.65px;font-size:14px;color:#111;font-weight:bold;transform:scaleX(0.9570);transform-origin:0 0;">1: 1-2</div>
<div class="t" style="left:1601.00px;top:216.07px;font-size:13.5px;color:#050505;transform:scaleX(0.9105);transform-origin:0 0;">Layer 1</div>
<svg class="s" style="left:1843px;top:211px;" width="24" height="24" viewBox="0 0 24 24"><path d="M21.29 13.09 L20.69 15.05 L17.22 15.19 L16.28 16.32 L16.80 19.75 L14.98 20.72 L12.44 18.36 L10.97 18.50 L8.91 21.29 L6.95 20.69 L6.81 17.22 L5.68 16.28 L2.25 16.80 L1.28 14.98 L3.64 12.44 L3.50 10.97 L0.71 8.91 L1.31 6.95 L4.78 6.81 L5.72 5.68 L5.20 2.25 L7.02 1.28 L9.56 3.64 L11.03 3.50 L13.09 0.71 L15.05 1.31 L15.19 4.78 L16.32 5.72 L19.75 5.20 L20.72 7.02 L18.36 9.56 L18.50 11.03 Z" fill="#222"/><circle cx="11.0" cy="11.0" r="3.8" fill="#f2f2f2"/><path d="M18 24 L24 18 V24 Z" fill="#777"/></svg>
<svg class="s" style="left:1518px;top:245px" width="21" height="21" viewBox="172 219.5 142 142"><circle cx="243" cy="290.5" r="71" fill="#fff" stroke="#eee" stroke-width="4"/><path d="M236.94 256.50 Q231.58 233.78 209.23 240.50 Q214.58 263.22 236.94 256.50 Z" fill="#d9f8c4" fill-opacity="1.0"/><path d="M236.00 260.00 Q219.00 243.00 202.00 260.00 Q219.00 277.00 236.00 260.00 Z" fill="#d9f8c4" fill-opacity="1.0"/><path d="M239.46 256.46 Q239.46 235.25 218.25 235.25 Q218.25 256.46 239.46 256.46 Z" fill="#45d353" fill-opacity="0.95"/><path d="M237.23 258.35 Q228.59 241.31 212.24 251.18 Q220.88 268.22 237.23 258.35 Z" fill="#cdbff3" fill-opacity="0.9"/><path d="M238.22 261.46 Q219.49 251.50 209.53 270.23 Q228.26 280.19 238.22 261.46 Z" fill="#45d353" fill-opacity="0.95"/><path d="M239.93 263.29 Q219.80 264.35 220.15 284.50 Q240.28 283.44 239.93 263.29 Z" fill="#cdbff3" fill-opacity="0.95"/><path d="M238.32 254.80 Q238.83 244.91 228.95 244.39 Q228.43 254.28 238.32 254.80 Z" fill="#1f9d3a" fill-opacity="0.8"/><path d="M236.42 262.39 Q227.45 258.21 223.27 267.18 Q232.24 271.37 236.42 262.39 Z" fill="#1f9d3a" fill-opacity="0.8"/><path d="M240.46 254.56 Q242.52 244.78 233.70 240.06 Q231.65 249.85 240.46 254.56 Z" fill="#8b6fdc" fill-opacity="1.0"/><path d="M234.00 260.00 Q228.00 254.00 222.00 260.00 Q228.00 266.00 234.00 260.00 Z" fill="#8b6fdc" fill-opacity="1.0"/><path d="M239.71 266.18 Q230.66 270.43 232.20 280.31 Q241.26 276.06 239.71 266.18 Z" fill="#8b6fdc" fill-opacity="1.0"/><path d="M195.11 246.75 Q198.63 254.58 206.89 252.25 Q203.37 244.42 195.11 246.75 Z" fill="#45d353" fill-opacity="1.0"/><path d="M205.68 282.73 Q214.21 283.59 216.32 275.27 Q207.79 274.41 205.68 282.73 Z" fill="#45d353" fill-opacity="1.0"/><path d="M249.06 256.50 Q271.42 263.22 276.77 240.50 Q254.42 233.78 249.06 256.50 Z" fill="#d9f8c4" fill-opacity="1.0"/><path d="M250.00 260.00 Q267.00 277.00 284.00 260.00 Q267.00 243.00 250.00 260.00 Z" fill="#d9f8c4" fill-opacity="1.0"/><path d="M246.54 256.46 Q267.75 256.46 267.75 235.25 Q246.54 235.25 246.54 256.46 Z" fill="#45d353" fill-opacity="0.95"/><path d="M248.77 258.35 Q265.12 268.22 273.76 251.18 Q257.41 241.31 248.77 258.35 Z" fill="#cdbff3" fill-opacity="0.9"/><path d="M247.78 261.46 Q257.74 280.19 276.47 270.23 Q266.51 251.50 247.78 261.46 Z" fill="#45d353" fill-opacity="0.95"/><path d="M246.07 263.29 Q245.72 283.44 265.85 284.50 Q266.20 264.35 246.07 263.29 Z" fill="#cdbff3" fill-opacity="0.95"/><path d="M247.68 254.80 Q257.57 254.28 257.05 244.39 Q247.17 244.91 247.68 254.80 Z" fill="#1f9d3a" fill-opacity="0.8"/><path d="M249.58 262.39 Q253.76 271.37 262.73 267.18 Q258.55 258.21 249.58 262.39 Z" fill="#1f9d3a" fill-opacity="0.8"/><path d="M245.54 254.56 Q254.35 249.85 252.30 240.06 Q243.48 244.78 245.54 254.56 Z" fill="#8b6fdc" fill-opacity="1.0"/><path d="M252.00 260.00 Q258.00 266.00 264.00 260.00 Q258.00 254.00 252.00 260.00 Z" fill="#8b6fdc" fill-opacity="1.0"/><path d="M246.29 266.18 Q244.74 276.06 253.80 280.31 Q255.34 270.43 246.29 266.18 Z" fill="#8b6fdc" fill-opacity="1.0"/><path d="M279.11 252.25 Q287.37 254.58 290.89 246.75 Q282.63 244.42 279.11 252.25 Z" fill="#45d353" fill-opacity="1.0"/><path d="M269.68 275.27 Q271.79 283.59 280.32 282.73 Q278.21 274.41 269.68 275.27 Z" fill="#45d353" fill-opacity="1.0"/><circle cx="243" cy="260" r="11.5" fill="#fff"/><path d="M238 258 Q244 255 248 262 Q244 260 243 265 Q241 275 245 290 Q238 278 240 266 Q240 261 238 258 Z" fill="#8b6fdc" fill-opacity="0.85"/><path d="M230.87 337.60 Q246.21 332.16 242.13 316.40 Q226.79 321.84 230.87 337.60 Z" fill="#45d353" fill-opacity="1.0"/><path d="M243.87 316.40 Q239.79 332.16 255.13 337.60 Q259.21 321.84 243.87 316.40 Z" fill="#45d353" fill-opacity="1.0"/><path d="M232.77 344.95 Q245.83 341.69 241.23 329.05 Q228.17 332.31 232.77 344.95 Z" fill="#d9f8c4" fill-opacity="1.0"/><path d="M244.77 329.05 Q240.17 341.69 253.23 344.95 Q257.83 332.31 244.77 329.05 Z" fill="#d9f8c4" fill-opacity="1.0"/><path d="M243.00 313.00 Q236.60 323.00 243.00 333.00 Q249.40 323.00 243.00 313.00 Z" fill="#cdbff3" fill-opacity="1.0"/><path d="M243.00 313.00 Q238.60 318.00 243.00 323.00 Q247.40 318.00 243.00 313.00 Z" fill="#8b6fdc" fill-opacity="1.0"/><path d="M243.00 342.00 Q237.80 349.50 243.00 357.00 Q248.20 349.50 243.00 342.00 Z" fill="#45d353" fill-opacity="1.0"/><text x="184" y="308" font-family="Liberation Sans" font-size="28" fill="#8b6fdc" letter-spacing="0.6" transform="translate(184 0) scale(1.35 1) translate(-184 0)">ascent</text></svg>
<div class="t" style="left:1543.00px;top:250.17px;font-size:13.5px;color:#050505;transform:scaleX(0.9850);transform-origin:0 0;">Corporate Logo.png</div>
<svg class="s" style="left:1501px;top:284px;" width="11" height="8" viewBox="0 0 11 8"><path d="M0.5 0.5 H10.5 L5.5 7 Z" fill="#222"/></svg>
<div class="t" style="left:1543.00px;top:282.17px;font-size:13.5px;color:#050505;transform:scaleX(0.9850);transform-origin:0 0;">Curve</div>
<svg class="s" style="left:1532px;top:312px;" width="17" height="17" viewBox="0 0 17 17"><rect x="1.5" y="1.5" width="14" height="14" fill="none" stroke="#222" stroke-width="1" stroke-dasharray="1.2 1.2"/><circle cx="1.5" cy="1.5" r="1.1" fill="#222"/><circle cx="15.5" cy="1.5" r="1.1" fill="#222"/><circle cx="1.5" cy="15.5" r="1.1" fill="#222"/><circle cx="15.5" cy="15.5" r="1.1" fill="#222"/><path d="M4 14 L8.5 3 L13 14 M5.5 10.5 H11.5" fill="none" stroke="#222" stroke-width="1.1"/></svg>
<div class="t" style="left:1554.60px;top:314.17px;font-size:13.5px;color:#050505;transform:scaleX(0.9850);transform-origin:0 0;">Welcome to the June edition of</div>
<svg class="s" style="left:1502px;top:347px;" width="8" height="11" viewBox="0 0 8 11"><path d="M0.5 0.5 V10.5 L7.5 5.5 Z" fill="#222"/></svg>
<div class="t" style="left:1543.00px;top:346.17px;font-size:13.5px;color:#050505;transform:scaleX(0.9850);transform-origin:0 0;">PowerClip Curve</div>
<svg class="s" style="left:1520px;top:376px;" width="17" height="17" viewBox="0 0 17 17"><path d="M1 16.5 L8.5 1 L16 16.5 M4 11 H13" fill="none" stroke="#222" stroke-width="1.5"/></svg>
<div class="t" style="left:1543.00px;top:378.17px;font-size:13.5px;color:#050505;transform:scaleX(0.9850);transform-origin:0 0;">Monthly Newsletter</div>
<div class="r" style="left:1518px;top:416px;width:21px;height:1px;background:#26fc9f;"></div>
<div class="t" style="left:1543.00px;top:410.17px;font-size:13.5px;color:#050505;transform:scaleX(0.9850);transform-origin:0 0;">Rectangle</div>
<svg class="s" style="left:1502px;top:443px;" width="8" height="11" viewBox="0 0 8 11"><path d="M0.5 0.5 V10.5 L7.5 5.5 Z" fill="#222"/></svg>
<div class="r" style="left:1520px;top:438px;width:16px;height:21px;background:#d1d1d3;box-sizing:border-box;border:1px solid #c4c4c6;"></div>
<div class="t" style="left:1543.00px;top:442.17px;font-size:13.5px;color:#050505;transform:scaleX(0.9850);transform-origin:0 0;">PowerClip Rectangle</div>
<svg class="s" style="left:1520px;top:472px;" width="17" height="17" viewBox="0 0 17 17"><path d="M1 16.5 L8.5 1 L16 16.5 M4 11 H13" fill="none" stroke="#222" stroke-width="1.5"/></svg>
<div class="t" style="left:1543.00px;top:474.17px;font-size:13.5px;color:#050505;transform:scaleX(0.9850);transform-origin:0 0;">Curated by Pam Roberts Marketi</div>
<svg class="s" style="left:1520px;top:504px;" width="17" height="17" viewBox="0 0 17 17"><path d="M1 16.5 L8.5 1 L16 16.5 M4 11 H13" fill="none" stroke="#222" stroke-width="1.5"/></svg>
<div class="t" style="left:1543.00px;top:506.17px;font-size:13.5px;color:#050505;transform:scaleX(0.9850);transform-origin:0 0;">Designed by Brent Lewis Senior</div>
<svg class="s" style="left:1520px;top:536px;" width="17" height="17" viewBox="0 0 17 17"><path d="M1 16.5 L8.5 1 L16 16.5 M4 11 H13" fill="none" stroke="#222" stroke-width="1.5"/></svg>
<div class="t" style="left:1543.00px;top:538.17px;font-size:13.5px;color:#050505;transform:scaleX(0.9850);transform-origin:0 0;">Highlights of the month</div>
<svg class="s" style="left:1520px;top:568px;" width="17" height="17" viewBox="0 0 17 17"><path d="M1 16.5 L8.5 1 L16 16.5 M4 11 H13" fill="none" stroke="#222" stroke-width="1.5"/></svg>
<div class="t" style="left:1543.00px;top:570.17px;font-size:13.5px;color:#050505;transform:scaleX(0.9850);transform-origin:0 0;">3</div>
<svg class="s" style="left:1517px;top:597px;" width="23" height="23" viewBox="0 0 23 23"><circle cx="11.5" cy="11.5" r="11" fill="#26fc9f"/></svg>
<div class="t" style="left:1543.00px;top:602.17px;font-size:13.5px;color:#050505;transform:scaleX(0.9850);transform-origin:0 0;">Ellipse</div>
<svg class="s" style="left:1520px;top:632px;" width="17" height="17" viewBox="0 0 17 17"><path d="M1 16.5 L8.5 1 L16 16.5 M4 11 H13" fill="none" stroke="#222" stroke-width="1.5"/></svg>
<div class="t" style="left:1543.00px;top:634.17px;font-size:13.5px;color:#050505;transform:scaleX(0.9850);transform-origin:0 0;">2</div>
<svg class="s" style="left:1517px;top:661px;" width="23" height="23" viewBox="0 0 23 23"><circle cx="11.5" cy="11.5" r="11" fill="#26fc9f"/></svg>
<div class="t" style="left:1543.00px;top:666.17px;font-size:13.5px;color:#050505;transform:scaleX(0.9850);transform-origin:0 0;">Ellipse</div>
<svg class="s" style="left:1520px;top:696px;" width="17" height="17" viewBox="0 0 17 17"><path d="M1 16.5 L8.5 1 L16 16.5 M4 11 H13" fill="none" stroke="#222" stroke-width="1.5"/></svg>
<div class="t" style="left:1543.00px;top:698.17px;font-size:13.5px;color:#050505;transform:scaleX(0.9850);transform-origin:0 0;">1</div>
<svg class="s" style="left:1517px;top:725px;" width="23" height="23" viewBox="0 0 23 23"><circle cx="11.5" cy="11.5" r="11" fill="#26fc9f"/></svg>
<div class="t" style="left:1543.00px;top:730.17px;font-size:13.5px;color:#050505;transform:scaleX(0.9850);transform-origin:0 0;">Ellipse</div>
<svg class="s" style="left:1520px;top:760px;" width="17" height="17" viewBox="0 0 17 17"><rect x="1.5" y="1.5" width="14" height="14" fill="none" stroke="#222" stroke-width="1" stroke-dasharray="1.2 1.2"/><circle cx="1.5" cy="1.5" r="1.1" fill="#222"/><circle cx="15.5" cy="1.5" r="1.1" fill="#222"/><circle cx="1.5" cy="15.5" r="1.1" fill="#222"/><circle cx="15.5" cy="15.5" r="1.1" fill="#222"/><path d="M4 14 L8.5 3 L13 14 M5.5 10.5 H11.5" fill="none" stroke="#222" stroke-width="1.1"/></svg>
<div class="t" style="left:1543.00px;top:762.17px;font-size:13.5px;color:#050505;transform:scaleX(0.9850);transform-origin:0 0;">Lorem ipsum dolor sit amet. Ka</div>
<div class="r" style="left:1518px;top:789px;width:21px;height:22px;background:#a24885;border-radius:2px;"></div>
<div class="t" style="left:1543.00px;top:794.17px;font-size:13.5px;color:#050505;transform:scaleX(0.9850);transform-origin:0 0;">Rectangle</div>
<svg class="s" style="left:1520px;top:824px;" width="17" height="17" viewBox="0 0 17 17"><rect x="1.5" y="1.5" width="14" height="14" fill="none" stroke="#222" stroke-width="1" stroke-dasharray="1.2 1.2"/><circle cx="1.5" cy="1.5" r="1.1" fill="#222"/><circle cx="15.5" cy="1.5" r="1.1" fill="#222"/><circle cx="1.5" cy="15.5" r="1.1" fill="#222"/><circle cx="15.5" cy="15.5" r="1.1" fill="#222"/><path d="M4 14 L8.5 3 L13 14 M5.5 10.5 H11.5" fill="none" stroke="#222" stroke-width="1.1"/></svg>
<div class="t" style="left:1543.00px;top:826.17px;font-size:13.5px;color:#050505;transform:scaleX(0.9850);transform-origin:0 0;">Lorem ipsum dolor sit amet. Ka</div>
<div class="r" style="left:1518px;top:853px;width:21px;height:22px;background:#a24885;border-radius:2px;"></div>
<div class="t" style="left:1543.00px;top:858.17px;font-size:13.5px;color:#050505;transform:scaleX(0.9850);transform-origin:0 0;">Rectangle</div>
<svg class="s" style="left:1520px;top:888px;" width="17" height="17" viewBox="0 0 17 17"><rect x="1.5" y="1.5" width="14" height="14" fill="none" stroke="#222" stroke-width="1" stroke-dasharray="1.2 1.2"/><circle cx="1.5" cy="1.5" r="1.1" fill="#222"/><circle cx="15.5" cy="1.5" r="1.1" fill="#222"/><circle cx="1.5" cy="15.5" r="1.1" fill="#222"/><circle cx="15.5" cy="15.5" r="1.1" fill="#222"/><path d="M4 14 L8.5 3 L13 14 M5.5 10.5 H11.5" fill="none" stroke="#222" stroke-width="1.1"/></svg>
<div class="t" style="left:1543.00px;top:890.17px;font-size:13.5px;color:#050505;transform:scaleX(0.9850);transform-origin:0 0;">Lorem ipsum dolor sit amet. Ka</div>
<div class="r" style="left:1518px;top:917px;width:21px;height:22px;background:#a24885;border-radius:2px;"></div>
<div class="t" style="left:1543.00px;top:922.17px;font-size:13.5px;color:#050505;transform:scaleX(0.9850);transform-origin:0 0;">Rectangle</div>
<svg class="s" style="left:1502px;top:955px;" width="8" height="11" viewBox="0 0 8 11"><path d="M0.5 0.5 V10.5 L7.5 5.5 Z" fill="#222"/></svg>
<div class="r" style="left:1518px;top:950px;width:22px;height:21px;background:#d1d1d3;box-sizing:border-box;border:1px solid #c4c4c6;"></div>
<div class="t" style="left:1543.00px;top:954.17px;font-size:13.5px;color:#050505;transform:scaleX(0.9850);transform-origin:0 0;">PowerClip Rectangle</div>
<div class="r" style="left:1478px;top:968px;width:391px;height:30px;background:#f0f0f0;"></div>
<div class="r" style="left:1869px;top:968px;width:1px;height:30px;background:#1e9be6;"></div>
<svg class="s" style="left:1852px;top:246px;" width="12" height="8" viewBox="0 0 12 8"><path d="M1 6.5 L6 1.5 L11 6.5" fill="none" stroke="#444" stroke-width="1.5"/></svg>
<div class="r" style="left:1849px;top:305px;width:19px;height:331px;background:#c9c9c9;"></div>
<svg class="s" style="left:1852px;top:953px;" width="12" height="8" viewBox="0 0 12 8"><path d="M1 1.5 L6 6.5 L11 1.5" fill="none" stroke="#444" stroke-width="1.5"/></svg>
<svg class="s" style="left:1484px;top:973px;" width="22" height="22" viewBox="0 0 22 22"><path d="M8 1 L1.5 6 L8 10" fill="none" stroke="#222" stroke-width="1.5"/><path d="M1 13 L11 7.5 L21 13 L11 19 Z" fill="#222"/><path d="M1 15 L11 21 L21 15" fill="#222"/><rect x="11" y="0" width="10" height="10" fill="#13a538"/><path d="M16 2 V8 M13 5 H19" stroke="#fff" stroke-width="1.4"/></svg>
<svg class="s" style="left:1517px;top:973px;" width="22" height="22" viewBox="0 0 22 22"><path d="M7 1 L1.5 5 L8 9 M1.5 9 L11 14 L20 9 M1.5 13 L11 18 L20 13 M1.5 17 L11 22" fill="none" stroke="#222" stroke-width="1.3"/><rect x="11" y="0" width="10" height="10" fill="#13a538"/><path d="M16 2 V8 M13 5 H19" stroke="#fff" stroke-width="1.4"/><path d="M17 22 L22 17 V22 Z" fill="#777"/></svg>
<svg class="s" style="left:1551px;top:973px;" width="22" height="22" viewBox="0 0 22 22"><text x="1" y="19" font-family="Liberation Serif" font-style="italic" font-size="15" fill="#c0c0c0">fx</text><rect x="12" y="1" width="8" height="8" fill="none" stroke="#c0c0c0" stroke-width="1.2"/><path d="M16 2.5 V7.5 M13.5 5 H18.5" stroke="#c0c0c0" stroke-width="1.2"/></svg>
<svg class="s" style="left:1584px;top:973px;" width="20" height="22" viewBox="0 0 20 22"><path d="M1 4 H19 M7 4 V1.5 H13 V4" fill="none" stroke="#c0c0c0" stroke-width="1.8"/><path d="M3 6 H17 L16 21 H4 Z" fill="#c0c0c0"/><path d="M7.5 8 V19 M12.5 8 V19" stroke="#f0f0f0" stroke-width="1.2"/></svg>
<div class="r" style="left:1718px;top:979px;width:145px;height:1px;background:#a9a9a9;"></div>
<div class="r" style="left:1718px;top:983px;width:145px;height:1px;background:#a9a9a9;"></div>
<div class="r" style="left:1718px;top:979px;width:1px;height:14px;background:#a9a9a9;"></div>
<div class="r" style="left:1862px;top:979px;width:1px;height:14px;background:#a9a9a9;"></div>
<div class="r" style="left:1790px;top:973px;width:1px;height:14px;background:#a9a9a9;"></div>
<div class="r" style="left:1759px;top:971px;width:7px;height:25px;background:#e8e8e8;box-sizing:border-box;border:1px solid #a9a9a9;border-radius:1px;"></div>
<div class="r" style="left:1870px;top:375px;width:25px;height:107px;background:#cce4fb;"></div>
<svg class="s" style="left:1873px;top:172px;" width="18" height="17" viewBox="0 0 18 17"><path d="M9 1 L17 4.5 L9 8 L1 4.5 Z" fill="#222"/><path d="M4 6 V12 Q9 16 14 12 V6 L9 8.5 Z" fill="#222"/><path d="M16 5 V10" stroke="#222" stroke-width="1.2"/></svg>
<div class="t" style="left:1890px;top:198px;font-size:13.5px;color:#1a1a1a;transform:rotate(90deg) scaleX(0.956);transform-origin:0 0;">Learn</div>
<svg class="s" style="left:1874px;top:264px;" width="18" height="20" viewBox="0 0 18 20"><path d="M1 6 L6 1 L11 6 L6 11 Z" fill="#fff" stroke="#222" stroke-width="1.3"/><path d="M3 6.5 H9 L6 9 Z" fill="#f26a0a"/><path d="M11 11 H13 M11 14 V19 M14 14 V19 M7 14 V17" stroke="#222" stroke-width="1.3"/><path d="M9 9 L12 9" stroke="#f26a0a" stroke-width="1.5"/></svg>
<div class="t" style="left:1890px;top:290px;font-size:13.5px;color:#1a1a1a;transform:rotate(90deg) scaleX(0.991);transform-origin:0 0;">Properties</div>
<svg class="s" style="left:1873px;top:382px;" width="18" height="18" viewBox="0 0 18 18"><path d="M9 1 L17 6 L9 11 L1 6 Z" fill="#fff" stroke="#222" stroke-width="1.3"/><path d="M1 10 L9 15 L17 10 L9 7 Z" fill="#222"/><path d="M1 11 L9 17 L17 11 L9 15 Z" fill="#222"/></svg>
<div class="t" style="left:1890px;top:409px;font-size:13.5px;color:#1a1a1a;transform:rotate(90deg) scaleX(0.961);transform-origin:0 0;">Objects</div>
<svg class="s" style="left:1873px;top:487px;" width="22" height="20" viewBox="0 0 22 20"><text x="1" y="9" font-family="Liberation Sans" font-size="9.5" fill="#222">A</text><path d="M18.60 14.00 L17.25 15.30 L16.80 17.12 L15.00 16.60 L13.20 17.12 L12.75 15.30 L11.40 14.00 L12.75 12.70 L13.20 10.88 L15.00 11.40 L16.80 10.88 L17.25 12.70 Z" fill="#222"/><circle cx="15" cy="14" r="1.1" fill="#d9d9d9"/></svg>
<div class="t" style="left:1890px;top:516.5px;font-size:13.5px;color:#1a1a1a;transform:rotate(90deg) scaleX(0.914);transform-origin:0 0;">Text</div>
<svg class="s" style="left:1872px;top:566px;" width="26" height="26" viewBox="0 0 26 26"><text x="1" y="21" font-family="Liberation Serif" font-style="italic" font-size="26" fill="#222">&#230;</text></svg>
<div class="t" style="left:1890px;top:598px;font-size:13.5px;color:#1a1a1a;transform:rotate(90deg) scaleX(0.976);transform-origin:0 0;">Glyphs</div>
<svg class="s" style="left:1875px;top:671px;" width="14" height="14" viewBox="0 0 14 14"><path d="M7 0 V14 M0 7 H14" stroke="#a9a9a9" stroke-width="2.2"/></svg>
<svg class="s" style="left:1899px;top:142px" width="20" height="6"><g fill="#b8b8b8"><rect x="0" y="0" width="1" height="1"/><rect x="1" y="2" width="1" height="1"/><rect x="0" y="4" width="1" height="1"/><rect x="2" y="0" width="1" height="1"/><rect x="3" y="2" width="1" height="1"/><rect x="2" y="4" width="1" height="1"/><rect x="4" y="0" width="1" height="1"/><rect x="5" y="2" width="1" height="1"/><rect x="4" y="4" width="1" height="1"/><rect x="6" y="0" width="1" height="1"/><rect x="7" y="2" width="1" height="1"/><rect x="6" y="4" width="1" height="1"/><rect x="8" y="0" width="1" height="1"/><rect x="9" y="2" width="1" height="1"/><rect x="8" y="4" width="1" height="1"/><rect x="10" y="0" width="1" height="1"/><rect x="11" y="2" width="1" height="1"/><rect x="10" y="4" width="1" height="1"/><rect x="12" y="0" width="1" height="1"/><rect x="13" y="2" width="1" height="1"/><rect x="12" y="4" width="1" height="1"/><rect x="14" y="0" width="1" height="1"/><rect x="15" y="2" width="1" height="1"/><rect x="14" y="4" width="1" height="1"/><rect x="16" y="0" width="1" height="1"/><rect x="17" y="2" width="1" height="1"/><rect x="16" y="4" width="1" height="1"/><rect x="18" y="0" width="1" height="1"/><rect x="19" y="2" width="1" height="1"/><rect x="18" y="4" width="1" height="1"/></g></svg>
<svg class="s" style="left:1903px;top:154px;" width="8" height="11" viewBox="0 0 8 11"><path d="M0.5 0.5 V10.5 L7 5.5 Z" fill="#555"/></svg>
<svg class="s" style="left:1898px;top:174px;" width="18" height="18" viewBox="0 0 18 18"><path d="M11 1.5 Q13 -0.5 15.5 1.5 Q18 4 16 6.5 L14 8.5 L9.5 4 Z" fill="#c8c8c8"/><path d="M10.5 5 L13 7.5 L4 16.5 Q2.5 17.5 1.2 16.5 Q0.5 15.5 1.5 14 Z" fill="none" stroke="#c8c8c8" stroke-width="1.2"/></svg>
<svg class="s" style="left:1900px;top:200px;" width="14" height="9" viewBox="0 0 14 9"><path d="M1 7.5 L7 1.5 L13 7.5" fill="none" stroke="#c8c8c8" stroke-width="1.6"/></svg>
<svg class="s" style="left:1897px;top:215px" width="22" height="736"><rect x="0" y="0" width="22" height="736" fill="#555"/><rect x="1" y="1" width="20" height="20" fill="#fff"/><path d="M4 18 L18 4" stroke="#e8101a" stroke-width="1"/><rect x="1" y="22" width="20" height="20" fill="#231f20"/><rect x="1" y="43" width="20" height="20" fill="#3d3d3d"/><rect x="1" y="64" width="20" height="20" fill="#575757"/><rect x="1" y="85" width="20" height="20" fill="#6e6e6e"/><rect x="1" y="106" width="20" height="20" fill="#838383"/><rect x="1" y="127" width="20" height="20" fill="#999999"/><rect x="1" y="148" width="20" height="20" fill="#b0b0b0"/><rect x="1" y="169" width="20" height="20" fill="#c7c7c7"/><rect x="1" y="190" width="20" height="20" fill="#dcdcdc"/><rect x="1" y="211" width="20" height="20" fill="#ebebeb"/><rect x="1" y="232" width="20" height="20" fill="#ffffff"/><rect x="1" y="253" width="20" height="20" fill="#2e3192"/><rect x="1" y="274" width="20" height="20" fill="#00aeef"/><rect x="1" y="295" width="20" height="20" fill="#00a651"/><rect x="1" y="316" width="20" height="20" fill="#fff200"/><rect x="1" y="337" width="20" height="20" fill="#ed1c24"/><rect x="1" y="358" width="20" height="20" fill="#ec008c"/><rect x="1" y="379" width="20" height="20" fill="#a3498a"/><rect x="1" y="400" width="20" height="20" fill="#f7941d"/><rect x="1" y="421" width="20" height="20" fill="#f9aeae"/><rect x="1" y="442" width="20" height="20" fill="#7d6960"/><rect x="1" y="463" width="20" height="20" fill="#c5c3e0"/><rect x="1" y="484" width="20" height="20" fill="#968fc6"/><rect x="1" y="505" width="20" height="20" fill="#6a89c5"/><rect x="1" y="526" width="20" height="20" fill="#7266af"/><rect x="1" y="547" width="20" height="20" fill="#7f7aa5"/><rect x="1" y="568" width="20" height="20" fill="#4b5b8a"/><rect x="1" y="589" width="20" height="20" fill="#4e476b"/><rect x="1" y="610" width="20" height="20" fill="#627591"/><rect x="1" y="631" width="20" height="20" fill="#0091d8"/><rect x="1" y="652" width="20" height="20" fill="#8ed6f5"/><rect x="1" y="673" width="20" height="20" fill="#a5c0d6"/><rect x="1" y="694" width="20" height="20" fill="#8598a8"/><rect x="1" y="715" width="20" height="20" fill="#627580"/><rect x="1" y="484" width="20" height="20" fill="none" stroke="#333" stroke-width="2"/></svg>
<svg class="s" style="left:1900px;top:955px;" width="14" height="9" viewBox="0 0 14 9"><path d="M1 1.5 L7 7.5 L13 1.5" fill="none" stroke="#c8c8c8" stroke-width="1.6"/></svg>
<svg class="s" style="left:1901px;top:976px;" width="14" height="11" viewBox="0 0 14 11"><path d="M1 1 L5.5 5.5 L1 10 M7 1 L11.5 5.5 L7 10" fill="none" stroke="#b8b8b8" stroke-width="1.5"/></svg>
</body></html>
